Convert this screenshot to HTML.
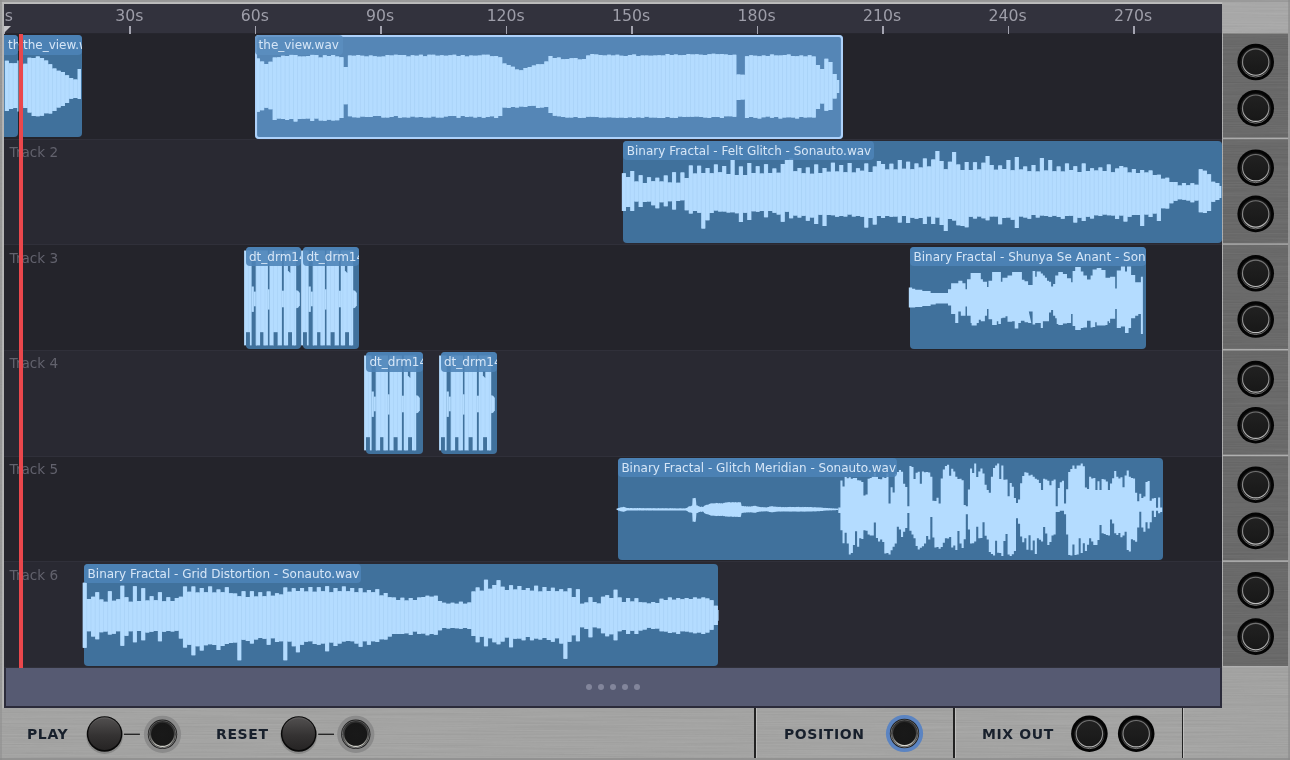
<!DOCTYPE html><html><head><meta charset="utf-8"><title>Timeline</title><style>
*{box-sizing:border-box;margin:0;padding:0}
html,body{width:1290px;height:760px;overflow:hidden}
#timeline,.blabel{will-change:transform}
body{position:relative;background:#a3a3a3;font-family:"DejaVu Sans","Liberation Sans",sans-serif}
#metal{position:absolute;left:0;top:0;width:1290px;height:760px}
#timeline{position:absolute;left:4px;top:4px;width:1217.8px;height:664px;background:#24242b;overflow:hidden}
#ruler{position:absolute;left:0;top:0;width:100%;height:30.2px;background:#32323d;border-bottom:1px solid #26262e}
.tick{position:absolute;top:21.7px;width:1.4px;height:8px;background:#a4a4b0;margin-left:-0.7px}
.tl{position:absolute;top:1.5px;width:60px;margin-left:-30px;text-align:center;font-size:15.7px;line-height:20px;color:#9e9ea9}
.track{position:absolute;left:0;width:100%;height:105.67px;border-bottom:1px solid #30303a}
.track.odd{background:#24242b}.track.even{background:#292932}
.tname{position:absolute;left:5.6px;top:4.3px;font-size:13.6px;line-height:16px;color:#62626d}
.clip{position:absolute;height:102px;background:#40719c;border-radius:4px}
.clip.sel{background:#5586b6;box-shadow:inset 0 0 0 2.1px #aed2fb;height:103.4px}
.clip .lbl{position:absolute;left:0;top:0;height:19.4px;background:rgba(76,131,183,.88);border-radius:4px;font-size:12px;line-height:20.4px;color:#d6e6f7;padding-left:3.4px;white-space:nowrap;overflow:hidden}
.clip.first .lbl{padding-left:7px}
.clip.sel .lbl{background:rgba(92,142,192,.85)}

#playhead{position:absolute;left:15px;top:30px;width:3.5px;height:636px;background:#ea474c}
#phtri{position:absolute;left:0;top:22px;width:0;height:0;border-top:7.4px solid #c4c4c8;border-right:7.4px solid transparent}
#scroll{position:absolute;left:4.2px;top:668px;width:1217.6px;height:39.6px;background:#565a72;border:2px solid #2b2b3a;border-top:0}
#dots{position:absolute;left:585px;top:683px;width:60px;height:8px}
.dot{position:absolute;top:0.8px;width:6.4px;height:6.4px;border-radius:3.2px;background:#82859b}

.blabel{position:absolute;top:725px;font-family:"DejaVu Sans","Liberation Sans",sans-serif;font-weight:bold;font-size:14px;line-height:18px;color:#18202c;letter-spacing:0.6px;white-space:nowrap}
.div{position:absolute;top:708px;width:1.6px;height:50px;background:#222;box-shadow:1px 0 0 rgba(255,255,255,.3)}
#hw{position:absolute;left:0;top:0;width:1290px;height:760px}
</style></head><body>
<svg id="metal" width="1290" height="760" viewBox="0 0 1290 760">
<defs>
<filter id="brush" x="0" y="0" width="100%" height="100%"><feTurbulence type="fractalNoise" baseFrequency="0.008 1.1" numOctaves="2" seed="3" result="n"/><feColorMatrix type="matrix" values="0 0 0 0 1  0 0 0 0 1  0 0 0 0 1  0.5 0 0 0 -0.17"/></filter>
<filter id="brushd" x="0" y="0" width="100%" height="100%"><feTurbulence type="fractalNoise" baseFrequency="0.008 1.1" numOctaves="2" seed="8" result="n"/><feColorMatrix type="matrix" values="0 0 0 0 0  0 0 0 0 0  0 0 0 0 0  0.5 0 0 0 -0.17"/></filter>
</defs>
<rect width="1290" height="760" fill="#a2a2a1"/>
<rect x="0" y="0" width="1290" height="2" fill="#999"/>
<rect x="0" y="2" width="1290" height="31.5" fill="#a9a9a9"/>
<rect x="1222" y="33.5" width="68" height="634.5" fill="#aeaeae"/>
<rect x="1223" y="33.5" width="65.1" height="104.1" fill="#696969"/><rect x="1223" y="139.2" width="65.1" height="104.1" fill="#696969"/><rect x="1223" y="244.8" width="65.1" height="104.1" fill="#696969"/><rect x="1223" y="350.5" width="65.1" height="104.1" fill="#696969"/><rect x="1223" y="456.2" width="65.1" height="104.1" fill="#696969"/><rect x="1223" y="561.9" width="65.1" height="104.1" fill="#696969"/>
<rect x="0" y="708" width="1290" height="52" fill="#a4a4a3"/>
<rect x="1222" y="667.6" width="68" height="40.4" fill="#a3a3a2"/>
<rect width="1290" height="760" filter="url(#brush)" opacity="0.22"/>
<rect width="1290" height="760" filter="url(#brushd)" opacity="0.16"/>
<rect x="2.2" y="2.2" width="2" height="706" fill="#b6b6b6"/>
<rect x="2.2" y="2.2" width="1220" height="1.8" fill="#bcbcbc"/>
<rect x="0" y="0" width="2" height="760" fill="#8e8e8e" opacity=".55"/>
<rect x="0" y="758" width="1290" height="2" fill="#8a8a8a" opacity=".7"/>
<rect x="1288.2" y="0" width="1.8" height="760" fill="#8c8c8c" opacity=".7"/>
</svg>
<div id="timeline">
<div class="track odd" style="top:30.00px"><span class="tname">Track 1</span></div>
<div class="track even" style="top:135.67px"><span class="tname">Track 2</span></div>
<div class="track odd" style="top:241.34px"><span class="tname">Track 3</span></div>
<div class="track even" style="top:347.01px"><span class="tname">Track 4</span></div>
<div class="track odd" style="top:452.68px"><span class="tname">Track 5</span></div>
<div class="track even" style="top:558.35px"><span class="tname">Track 6</span></div>
<div id="ruler">
<div class="tick" style="left:0.7px"></div><div class="tl" style="left:-0.1px">0s</div>
<div class="tick" style="left:126.1px"></div><div class="tl" style="left:125.3px">30s</div>
<div class="tick" style="left:251.6px"></div><div class="tl" style="left:250.8px">60s</div>
<div class="tick" style="left:377.1px"></div><div class="tl" style="left:376.2px">90s</div>
<div class="tick" style="left:502.5px"></div><div class="tl" style="left:501.7px">120s</div>
<div class="tick" style="left:627.9px"></div><div class="tl" style="left:627.1px">150s</div>
<div class="tick" style="left:753.4px"></div><div class="tl" style="left:752.6px">180s</div>
<div class="tick" style="left:878.8px"></div><div class="tl" style="left:878.0px">210s</div>
<div class="tick" style="left:1004.3px"></div><div class="tl" style="left:1003.5px">240s</div>
<div class="tick" style="left:1129.8px"></div><div class="tl" style="left:1129.0px">270s</div>
<div id="phtri"></div></div>
<div class="clip first" style="left:-3.0px;top:31.4px;width:17.4px"><svg width="17.4" height="103.4" viewBox="1.0 35.4 17.4 103.4" style="position:absolute;left:0;top:0;overflow:visible"><path d="M4.8 61.2 L9.0 61.2 L9.0 63.6 L13.2 63.6 L13.2 63.6 L17.3 63.6 L17.3 60.8 L18.4 60.8 L18.4 111.8 L17.3 111.8 L17.3 108.4 L13.2 108.4 L13.2 109.3 L9.0 109.3 L9.0 111.5 L4.8 111.5Z" fill="#aad3f8"/><path d="M5.2 61.2h3.3V111.5h-3.3zM9.4 63.6h3.3V109.3h-3.3zM13.6 63.6h3.3V108.4h-3.3zM17.8 60.8h0.4V111.8h-0.4z" fill="#b4dcff"/></svg><div class="lbl" style="width:100%">th</div></div>
<div class="clip" style="left:15.6px;top:31.4px;width:62.9px"><svg width="62.9" height="103.4" viewBox="19.6 35.4 62.9 103.4" style="position:absolute;left:0;top:0;overflow:visible"><path d="M18.6 65.5 L22.8 65.5 L22.8 64.1 L27.0 64.1 L27.0 58.2 L31.1 58.2 L31.1 58.3 L35.3 58.3 L35.3 57.0 L39.5 57.0 L39.5 58.4 L43.7 58.4 L43.7 61.0 L47.9 61.0 L47.9 64.6 L52.0 64.6 L52.0 68.9 L56.2 68.9 L56.2 71.2 L60.4 71.2 L60.4 72.5 L64.6 72.5 L64.6 75.7 L68.8 75.7 L68.8 78.4 L72.9 78.4 L72.9 79.9 L77.1 79.9 L77.1 69.5 L80.6 69.5 L80.6 99.3 L77.1 99.3 L77.1 98.4 L72.9 98.4 L72.9 99.2 L68.8 99.2 L68.8 103.3 L64.6 103.3 L64.6 106.3 L60.4 106.3 L60.4 108.0 L56.2 108.0 L56.2 111.5 L52.0 111.5 L52.0 113.8 L47.9 113.8 L47.9 113.6 L43.7 113.6 L43.7 116.2 L39.5 116.2 L39.5 116.7 L35.3 116.7 L35.3 116.3 L31.1 116.3 L31.1 113.0 L27.0 113.0 L27.0 108.5 L22.8 108.5 L22.8 106.6 L18.6 106.6Z" fill="#aad3f8"/><path d="M19.1 65.5h3.3V106.6h-3.3zM23.2 64.1h3.3V108.5h-3.3zM27.4 58.2h3.3V113.0h-3.3zM31.6 58.3h3.3V116.3h-3.3zM35.8 57.0h3.3V116.7h-3.3zM40.0 58.4h3.3V116.2h-3.3zM44.1 61.0h3.3V113.6h-3.3zM48.3 64.6h3.3V113.8h-3.3zM52.5 68.9h3.3V111.5h-3.3zM56.7 71.2h3.3V108.0h-3.3zM60.9 72.5h3.3V106.3h-3.3zM65.0 75.7h3.3V103.3h-3.3zM69.2 78.4h3.3V99.2h-3.3zM73.4 79.9h3.3V98.4h-3.3zM77.6 69.5h2.6V99.3h-2.6z" fill="#b4dcff"/></svg><div class="lbl" style="width:100%">the_view.wav</div></div>
<div class="clip sel" style="left:251.2px;top:31.4px;width:588.0px"><svg width="588.0" height="103.4" viewBox="255.2 35.4 588.0 103.4" style="position:absolute;left:0;top:0;overflow:visible"><path d="M256.0 59.0 L260.2 59.0 L260.2 61.8 L264.4 61.8 L264.4 64.5 L268.5 64.5 L268.5 62.2 L272.7 62.2 L272.7 57.9 L276.9 57.9 L276.9 57.7 L281.1 57.7 L281.1 56.2 L285.3 56.2 L285.3 56.4 L289.4 56.4 L289.4 54.6 L293.6 54.6 L293.6 55.4 L297.8 55.4 L297.8 56.9 L302.0 56.9 L302.0 57.0 L306.2 57.0 L306.2 56.5 L310.3 56.5 L310.3 54.5 L314.5 54.5 L314.5 55.3 L318.7 55.3 L318.7 57.8 L322.9 57.8 L322.9 55.6 L327.1 55.6 L327.1 56.5 L331.2 56.5 L331.2 55.4 L335.4 55.4 L335.4 57.0 L339.6 57.0 L339.6 57.7 L343.8 57.7 L343.8 67.4 L348.0 67.4 L348.0 55.8 L352.1 55.8 L352.1 56.1 L356.3 56.1 L356.3 55.4 L360.5 55.4 L360.5 56.1 L364.7 56.1 L364.7 57.0 L368.9 57.0 L368.9 56.0 L373.0 56.0 L373.0 56.7 L377.2 56.7 L377.2 57.2 L381.4 57.2 L381.4 56.8 L385.6 56.8 L385.6 55.3 L389.8 55.3 L389.8 55.9 L393.9 55.9 L393.9 55.2 L398.1 55.2 L398.1 55.5 L402.3 55.5 L402.3 55.5 L406.5 55.5 L406.5 56.9 L410.7 56.9 L410.7 55.7 L414.8 55.7 L414.8 56.1 L419.0 56.1 L419.0 55.2 L423.2 55.2 L423.2 56.6 L427.4 56.6 L427.4 55.1 L431.6 55.1 L431.6 55.2 L435.7 55.2 L435.7 56.2 L439.9 56.2 L439.9 55.7 L444.1 55.7 L444.1 56.1 L448.3 56.1 L448.3 55.6 L452.5 55.6 L452.5 55.2 L456.6 55.2 L456.6 56.4 L460.8 56.4 L460.8 55.3 L465.0 55.3 L465.0 57.0 L469.2 57.0 L469.2 55.8 L473.4 55.8 L473.4 56.2 L477.5 56.2 L477.5 55.9 L481.7 55.9 L481.7 55.1 L485.9 55.1 L485.9 55.1 L490.1 55.1 L490.1 56.7 L494.3 56.7 L494.3 56.5 L498.4 56.5 L498.4 57.7 L502.6 57.7 L502.6 64.0 L506.8 64.0 L506.8 65.5 L511.0 65.5 L511.0 67.2 L515.2 67.2 L515.2 70.0 L519.3 70.0 L519.3 70.6 L523.5 70.6 L523.5 68.5 L527.7 68.5 L527.7 67.3 L531.9 67.3 L531.9 66.0 L536.1 66.0 L536.1 64.6 L540.2 64.6 L540.2 64.6 L544.4 64.6 L544.4 62.0 L548.6 62.0 L548.6 56.5 L552.8 56.5 L552.8 58.3 L557.0 58.3 L557.0 57.8 L561.1 57.8 L561.1 59.6 L565.3 59.6 L565.3 59.5 L569.5 59.5 L569.5 58.6 L573.7 58.6 L573.7 58.3 L577.9 58.3 L577.9 59.8 L582.0 59.8 L582.0 59.3 L586.2 59.3 L586.2 55.8 L590.4 55.8 L590.4 54.5 L594.6 54.5 L594.6 55.0 L598.8 55.0 L598.8 55.4 L602.9 55.4 L602.9 55.8 L607.1 55.8 L607.1 55.2 L611.3 55.2 L611.3 56.0 L615.5 56.0 L615.5 55.2 L619.7 55.2 L619.7 56.2 L623.8 56.2 L623.8 56.5 L628.0 56.5 L628.0 55.5 L632.2 55.5 L632.2 54.8 L636.4 54.8 L636.4 56.4 L640.6 56.4 L640.6 55.9 L644.7 55.9 L644.7 56.0 L648.9 56.0 L648.9 56.1 L653.1 56.1 L653.1 55.8 L657.3 55.8 L657.3 55.7 L661.5 55.7 L661.5 55.8 L665.6 55.8 L665.6 54.5 L669.8 54.5 L669.8 55.3 L674.0 55.3 L674.0 54.8 L678.2 54.8 L678.2 55.6 L682.4 55.6 L682.4 55.3 L686.5 55.3 L686.5 54.4 L690.7 54.4 L690.7 54.9 L694.9 54.9 L694.9 54.6 L699.1 54.6 L699.1 55.2 L703.3 55.2 L703.3 55.4 L707.4 55.4 L707.4 54.7 L711.6 54.7 L711.6 54.2 L715.8 54.2 L715.8 54.7 L720.0 54.7 L720.0 54.3 L724.2 54.3 L724.2 54.8 L728.3 54.8 L728.3 55.3 L732.5 55.3 L732.5 55.1 L736.7 55.1 L736.7 75.0 L740.9 75.0 L740.9 75.2 L745.1 75.2 L745.1 56.6 L749.2 56.6 L749.2 55.7 L753.4 55.7 L753.4 56.1 L757.6 56.1 L757.6 56.7 L761.8 56.7 L761.8 56.0 L766.0 56.0 L766.0 56.5 L770.1 56.5 L770.1 54.9 L774.3 54.9 L774.3 55.9 L778.5 55.9 L778.5 55.9 L782.7 55.9 L782.7 55.3 L786.9 55.3 L786.9 55.0 L791.0 55.0 L791.0 56.5 L795.2 56.5 L795.2 56.6 L799.4 56.6 L799.4 55.9 L803.6 55.9 L803.6 56.8 L807.8 56.8 L807.8 55.7 L811.9 55.7 L811.9 57.0 L816.1 57.0 L816.1 65.4 L820.3 65.4 L820.3 69.5 L824.5 69.5 L824.5 59.1 L828.7 59.1 L828.7 62.4 L832.8 62.4 L832.8 74.3 L837.0 74.3 L837.0 80.5 L839.5 80.5 L839.5 93.5 L837.0 93.5 L837.0 99.0 L832.8 99.0 L832.8 110.3 L828.7 110.3 L828.7 111.2 L824.5 111.2 L824.5 104.0 L820.3 104.0 L820.3 109.3 L816.1 109.3 L816.1 118.0 L811.9 118.0 L811.9 117.6 L807.8 117.6 L807.8 118.0 L803.6 118.0 L803.6 117.5 L799.4 117.5 L799.4 118.8 L795.2 118.8 L795.2 117.8 L791.0 117.8 L791.0 117.6 L786.9 117.6 L786.9 117.9 L782.7 117.9 L782.7 118.8 L778.5 118.8 L778.5 117.3 L774.3 117.3 L774.3 118.1 L770.1 118.1 L770.1 117.0 L766.0 117.0 L766.0 117.7 L761.8 117.7 L761.8 118.9 L757.6 118.9 L757.6 118.1 L753.4 118.1 L753.4 117.3 L749.2 117.3 L749.2 118.3 L745.1 118.3 L745.1 100.0 L740.9 100.0 L740.9 100.3 L736.7 100.3 L736.7 117.2 L732.5 117.2 L732.5 116.7 L728.3 116.7 L728.3 116.6 L724.2 116.6 L724.2 118.3 L720.0 118.3 L720.0 117.4 L715.8 117.4 L715.8 117.5 L711.6 117.5 L711.6 118.5 L707.4 118.5 L707.4 117.9 L703.3 117.9 L703.3 117.5 L699.1 117.5 L699.1 116.8 L694.9 116.8 L694.9 117.2 L690.7 117.2 L690.7 117.1 L686.5 117.1 L686.5 117.3 L682.4 117.3 L682.4 117.0 L678.2 117.0 L678.2 118.3 L674.0 118.3 L674.0 118.2 L669.8 118.2 L669.8 117.3 L665.6 117.3 L665.6 118.4 L661.5 118.4 L661.5 118.5 L657.3 118.5 L657.3 117.8 L653.1 117.8 L653.1 118.0 L648.9 118.0 L648.9 117.2 L644.7 117.2 L644.7 118.2 L640.6 118.2 L640.6 117.7 L636.4 117.7 L636.4 118.3 L632.2 118.3 L632.2 117.6 L628.0 117.6 L628.0 118.4 L623.8 118.4 L623.8 117.8 L619.7 117.8 L619.7 118.1 L615.5 118.1 L615.5 118.0 L611.3 118.0 L611.3 117.6 L607.1 117.6 L607.1 117.8 L602.9 117.8 L602.9 117.8 L598.8 117.8 L598.8 117.5 L594.6 117.5 L594.6 117.2 L590.4 117.2 L590.4 117.2 L586.2 117.2 L586.2 118.2 L582.0 118.2 L582.0 118.4 L577.9 118.4 L577.9 117.5 L573.7 117.5 L573.7 118.0 L569.5 118.0 L569.5 117.9 L565.3 117.9 L565.3 117.3 L561.1 117.3 L561.1 116.7 L557.0 116.7 L557.0 116.1 L552.8 116.1 L552.8 113.3 L548.6 113.3 L548.6 107.5 L544.4 107.5 L544.4 107.9 L540.2 107.9 L540.2 108.4 L536.1 108.4 L536.1 106.2 L531.9 106.2 L531.9 106.5 L527.7 106.5 L527.7 107.5 L523.5 107.5 L523.5 106.9 L519.3 106.9 L519.3 107.8 L515.2 107.8 L515.2 107.3 L511.0 107.3 L511.0 108.3 L506.8 108.3 L506.8 107.8 L502.6 107.8 L502.6 116.4 L498.4 116.4 L498.4 118.4 L494.3 118.4 L494.3 116.7 L490.1 116.7 L490.1 117.4 L485.9 117.4 L485.9 118.2 L481.7 118.2 L481.7 117.2 L477.5 117.2 L477.5 118.0 L473.4 118.0 L473.4 116.8 L469.2 116.8 L469.2 117.4 L465.0 117.4 L465.0 116.4 L460.8 116.4 L460.8 118.2 L456.6 118.2 L456.6 116.5 L452.5 116.5 L452.5 116.5 L448.3 116.5 L448.3 116.8 L444.1 116.8 L444.1 118.0 L439.9 118.0 L439.9 117.9 L435.7 117.9 L435.7 116.8 L431.6 116.8 L431.6 118.0 L427.4 118.0 L427.4 117.8 L423.2 117.8 L423.2 117.5 L419.0 117.5 L419.0 117.6 L414.8 117.6 L414.8 116.8 L410.7 116.8 L410.7 118.0 L406.5 118.0 L406.5 117.6 L402.3 117.6 L402.3 118.1 L398.1 118.1 L398.1 116.3 L393.9 116.3 L393.9 117.4 L389.8 117.4 L389.8 117.8 L385.6 117.8 L385.6 118.0 L381.4 118.0 L381.4 116.3 L377.2 116.3 L377.2 116.4 L373.0 116.4 L373.0 117.3 L368.9 117.3 L368.9 117.3 L364.7 117.3 L364.7 117.0 L360.5 117.0 L360.5 117.8 L356.3 117.8 L356.3 117.7 L352.1 117.7 L352.1 116.6 L348.0 116.6 L348.0 104.7 L343.8 104.7 L343.8 118.4 L339.6 118.4 L339.6 120.7 L335.4 120.7 L335.4 120.8 L331.2 120.8 L331.2 120.1 L327.1 120.1 L327.1 121.1 L322.9 121.1 L322.9 121.0 L318.7 121.0 L318.7 119.0 L314.5 119.0 L314.5 121.3 L310.3 121.3 L310.3 119.0 L306.2 119.0 L306.2 119.2 L302.0 119.2 L302.0 119.4 L297.8 119.4 L297.8 121.8 L293.6 121.8 L293.6 119.4 L289.4 119.4 L289.4 120.5 L285.3 120.5 L285.3 119.4 L281.1 119.4 L281.1 118.9 L276.9 118.9 L276.9 120.5 L272.7 120.5 L272.7 109.6 L268.5 109.6 L268.5 108.1 L264.4 108.1 L264.4 110.7 L260.2 110.7 L260.2 112.2 L256.0 112.2Z" fill="#aad3f8"/><path d="M256.4 59.0h3.3V112.2h-3.3zM260.6 61.8h3.3V110.7h-3.3zM264.8 64.5h3.3V108.1h-3.3zM269.0 62.2h3.3V109.6h-3.3zM273.2 57.9h3.3V120.5h-3.3zM277.3 57.7h3.3V118.9h-3.3zM281.5 56.2h3.3V119.4h-3.3zM285.7 56.4h3.3V120.5h-3.3zM289.9 54.6h3.3V119.4h-3.3zM294.1 55.4h3.3V121.8h-3.3zM298.2 56.9h3.3V119.4h-3.3zM302.4 57.0h3.3V119.2h-3.3zM306.6 56.5h3.3V119.0h-3.3zM310.8 54.5h3.3V121.3h-3.3zM315.0 55.3h3.3V119.0h-3.3zM319.1 57.8h3.3V121.0h-3.3zM323.3 55.6h3.3V121.1h-3.3zM327.5 56.5h3.3V120.1h-3.3zM331.7 55.4h3.3V120.8h-3.3zM335.9 57.0h3.3V120.7h-3.3zM340.1 57.7h3.3V118.4h-3.3zM344.2 67.4h3.3V104.7h-3.3zM348.4 55.8h3.3V116.6h-3.3zM352.6 56.1h3.3V117.7h-3.3zM356.8 55.4h3.3V117.8h-3.3zM360.9 56.1h3.3V117.0h-3.3zM365.1 57.0h3.3V117.3h-3.3zM369.3 56.0h3.3V117.3h-3.3zM373.5 56.7h3.3V116.4h-3.3zM377.7 57.2h3.3V116.3h-3.3zM381.8 56.8h3.3V118.0h-3.3zM386.0 55.3h3.3V117.8h-3.3zM390.2 55.9h3.3V117.4h-3.3zM394.4 55.2h3.3V116.3h-3.3zM398.6 55.5h3.3V118.1h-3.3zM402.7 55.5h3.3V117.6h-3.3zM406.9 56.9h3.3V118.0h-3.3zM411.1 55.7h3.3V116.8h-3.3zM415.3 56.1h3.3V117.6h-3.3zM419.5 55.2h3.3V117.5h-3.3zM423.6 56.6h3.3V117.8h-3.3zM427.8 55.1h3.3V118.0h-3.3zM432.0 55.2h3.3V116.8h-3.3zM436.2 56.2h3.3V117.9h-3.3zM440.4 55.7h3.3V118.0h-3.3zM444.6 56.1h3.3V116.8h-3.3zM448.7 55.6h3.3V116.5h-3.3zM452.9 55.2h3.3V116.5h-3.3zM457.1 56.4h3.3V118.2h-3.3zM461.3 55.3h3.3V116.4h-3.3zM465.4 57.0h3.3V117.4h-3.3zM469.6 55.8h3.3V116.8h-3.3zM473.8 56.2h3.3V118.0h-3.3zM478.0 55.9h3.3V117.2h-3.3zM482.2 55.1h3.3V118.2h-3.3zM486.3 55.1h3.3V117.4h-3.3zM490.5 56.7h3.3V116.7h-3.3zM494.7 56.5h3.3V118.4h-3.3zM498.9 57.7h3.3V116.4h-3.3zM503.1 64.0h3.3V107.8h-3.3zM507.2 65.5h3.3V108.3h-3.3zM511.4 67.2h3.3V107.3h-3.3zM515.6 70.0h3.3V107.8h-3.3zM519.8 70.6h3.3V106.9h-3.3zM524.0 68.5h3.3V107.5h-3.3zM528.2 67.3h3.3V106.5h-3.3zM532.3 66.0h3.3V106.2h-3.3zM536.5 64.6h3.3V108.4h-3.3zM540.7 64.6h3.3V107.9h-3.3zM544.9 62.0h3.3V107.5h-3.3zM549.0 56.5h3.3V113.3h-3.3zM553.2 58.3h3.3V116.1h-3.3zM557.4 57.8h3.3V116.7h-3.3zM561.6 59.6h3.3V117.3h-3.3zM565.8 59.5h3.3V117.9h-3.3zM570.0 58.6h3.3V118.0h-3.3zM574.1 58.3h3.3V117.5h-3.3zM578.3 59.8h3.3V118.4h-3.3zM582.5 59.3h3.3V118.2h-3.3zM586.7 55.8h3.3V117.2h-3.3zM590.9 54.5h3.3V117.2h-3.3zM595.0 55.0h3.3V117.5h-3.3zM599.2 55.4h3.3V117.8h-3.3zM603.4 55.8h3.3V117.8h-3.3zM607.6 55.2h3.3V117.6h-3.3zM611.8 56.0h3.3V118.0h-3.3zM615.9 55.2h3.3V118.1h-3.3zM620.1 56.2h3.3V117.8h-3.3zM624.3 56.5h3.3V118.4h-3.3zM628.5 55.5h3.3V117.6h-3.3zM632.7 54.8h3.3V118.3h-3.3zM636.8 56.4h3.3V117.7h-3.3zM641.0 55.9h3.3V118.2h-3.3zM645.2 56.0h3.3V117.2h-3.3zM649.4 56.1h3.3V118.0h-3.3zM653.5 55.8h3.3V117.8h-3.3zM657.7 55.7h3.3V118.5h-3.3zM661.9 55.8h3.3V118.4h-3.3zM666.1 54.5h3.3V117.3h-3.3zM670.3 55.3h3.3V118.2h-3.3zM674.5 54.8h3.3V118.3h-3.3zM678.6 55.6h3.3V117.0h-3.3zM682.8 55.3h3.3V117.3h-3.3zM687.0 54.4h3.3V117.1h-3.3zM691.2 54.9h3.3V117.2h-3.3zM695.4 54.6h3.3V116.8h-3.3zM699.5 55.2h3.3V117.5h-3.3zM703.7 55.4h3.3V117.9h-3.3zM707.9 54.7h3.3V118.5h-3.3zM712.1 54.2h3.3V117.5h-3.3zM716.2 54.7h3.3V117.4h-3.3zM720.4 54.3h3.3V118.3h-3.3zM724.6 54.8h3.3V116.6h-3.3zM728.8 55.3h3.3V116.7h-3.3zM733.0 55.1h3.3V117.2h-3.3zM737.2 75.0h3.3V100.3h-3.3zM741.3 75.2h3.3V100.0h-3.3zM745.5 56.6h3.3V118.3h-3.3zM749.7 55.7h3.3V117.3h-3.3zM753.9 56.1h3.3V118.1h-3.3zM758.0 56.7h3.3V118.9h-3.3zM762.2 56.0h3.3V117.7h-3.3zM766.4 56.5h3.3V117.0h-3.3zM770.6 54.9h3.3V118.1h-3.3zM774.8 55.9h3.3V117.3h-3.3zM779.0 55.9h3.3V118.8h-3.3zM783.1 55.3h3.3V117.9h-3.3zM787.3 55.0h3.3V117.6h-3.3zM791.5 56.5h3.3V117.8h-3.3zM795.7 56.6h3.3V118.8h-3.3zM799.9 55.9h3.3V117.5h-3.3zM804.0 56.8h3.3V118.0h-3.3zM808.2 55.7h3.3V117.6h-3.3zM812.4 57.0h3.3V118.0h-3.3zM816.6 65.4h3.3V109.3h-3.3zM820.8 69.5h3.3V104.0h-3.3zM824.9 59.1h3.3V111.2h-3.3zM829.1 62.4h3.3V110.3h-3.3zM833.3 74.3h3.3V99.0h-3.3zM837.5 80.5h1.6V93.5h-1.6z" fill="#b4dcff"/></svg><div class="lbl" style="width:88.0px">the_view.wav</div></div>
<div class="clip" style="left:619.4px;top:137.0px;width:598.4px"><svg width="598.4" height="103.4" viewBox="623.4 141.0 598.4 103.4" style="position:absolute;left:0;top:0;overflow:visible"><path d="M622.2 173.3 L626.4 173.3 L626.4 177.0 L630.6 177.0 L630.6 171.0 L634.7 171.0 L634.7 181.6 L638.9 181.6 L638.9 175.3 L643.1 175.3 L643.1 183.0 L647.3 183.0 L647.3 177.2 L651.5 177.2 L651.5 181.3 L655.6 181.3 L655.6 177.8 L659.8 177.8 L659.8 181.6 L664.0 181.6 L664.0 175.6 L668.2 175.6 L668.2 182.4 L672.4 182.4 L672.4 172.3 L676.5 172.3 L676.5 182.8 L680.7 182.8 L680.7 172.4 L684.9 172.4 L684.9 178.1 L689.1 178.1 L689.1 165.4 L693.3 165.4 L693.3 173.4 L697.4 173.4 L697.4 165.7 L701.6 165.7 L701.6 173.1 L705.8 173.1 L705.8 167.9 L710.0 167.9 L710.0 173.2 L714.2 173.2 L714.2 164.5 L718.3 164.5 L718.3 172.2 L722.5 172.2 L722.5 165.9 L726.7 165.9 L726.7 173.9 L730.9 173.9 L730.9 160.0 L735.1 160.0 L735.1 175.1 L739.2 175.1 L739.2 166.5 L743.4 166.5 L743.4 174.9 L747.6 174.9 L747.6 163.0 L751.8 163.0 L751.8 173.1 L756.0 173.1 L756.0 166.2 L760.1 166.2 L760.1 173.6 L764.3 173.6 L764.3 164.3 L768.5 164.3 L768.5 173.0 L772.7 173.0 L772.7 168.5 L776.9 168.5 L776.9 172.7 L781.0 172.7 L781.0 163.9 L785.2 163.9 L785.2 160.0 L789.4 160.0 L789.4 158.5 L793.6 158.5 L793.6 171.3 L797.8 171.3 L797.8 167.9 L801.9 167.9 L801.9 173.3 L806.1 173.3 L806.1 167.6 L810.3 167.6 L810.3 173.7 L814.5 173.7 L814.5 164.5 L818.7 164.5 L818.7 173.1 L822.8 173.1 L822.8 168.1 L827.0 168.1 L827.0 171.7 L831.2 171.7 L831.2 162.8 L835.4 162.8 L835.4 171.4 L839.6 171.4 L839.6 164.9 L843.7 164.9 L843.7 172.3 L847.9 172.3 L847.9 163.0 L852.1 163.0 L852.1 172.4 L856.3 172.4 L856.3 168.2 L860.5 168.2 L860.5 170.8 L864.6 170.8 L864.6 163.4 L868.8 163.4 L868.8 171.9 L873.0 171.9 L873.0 166.6 L877.2 166.6 L877.2 161.0 L881.4 161.0 L881.4 164.0 L885.5 164.0 L885.5 169.6 L889.7 169.6 L889.7 163.7 L893.9 163.7 L893.9 169.5 L898.1 169.5 L898.1 160.0 L902.3 160.0 L902.3 168.7 L906.4 168.7 L906.4 161.8 L910.6 161.8 L910.6 169.3 L914.8 169.3 L914.8 163.6 L919.0 163.6 L919.0 167.5 L923.2 167.5 L923.2 158.6 L927.3 158.6 L927.3 166.5 L931.5 166.5 L931.5 159.4 L935.7 159.4 L935.7 151.0 L939.9 151.0 L939.9 161.0 L944.1 161.0 L944.1 169.2 L948.2 169.2 L948.2 161.8 L952.4 161.8 L952.4 152.0 L956.6 152.0 L956.6 164.5 L960.8 164.5 L960.8 170.1 L965.0 170.1 L965.0 162.0 L969.1 162.0 L969.1 170.0 L973.3 170.0 L973.3 162.3 L977.5 162.3 L977.5 169.4 L981.7 169.4 L981.7 162.8 L985.9 162.8 L985.9 156.0 L990.0 156.0 L990.0 165.0 L994.2 165.0 L994.2 169.7 L998.4 169.7 L998.4 165.6 L1002.6 165.6 L1002.6 169.0 L1006.8 169.0 L1006.8 160.0 L1010.9 160.0 L1010.9 170.3 L1015.1 170.3 L1015.1 157.0 L1019.3 157.0 L1019.3 169.6 L1023.5 169.6 L1023.5 166.6 L1027.7 166.6 L1027.7 171.2 L1031.8 171.2 L1031.8 164.9 L1036.0 164.9 L1036.0 171.5 L1040.2 171.5 L1040.2 158.0 L1044.4 158.0 L1044.4 170.4 L1048.6 170.4 L1048.6 160.0 L1052.7 160.0 L1052.7 171.2 L1056.9 171.2 L1056.9 166.4 L1061.1 166.4 L1061.1 171.4 L1065.3 171.4 L1065.3 163.5 L1069.5 163.5 L1069.5 170.1 L1073.6 170.1 L1073.6 166.3 L1077.8 166.3 L1077.8 172.1 L1082.0 172.1 L1082.0 163.5 L1086.2 163.5 L1086.2 171.0 L1090.4 171.0 L1090.4 168.2 L1094.5 168.2 L1094.5 170.6 L1098.7 170.6 L1098.7 167.6 L1102.9 167.6 L1102.9 171.1 L1107.1 171.1 L1107.1 164.4 L1111.3 164.4 L1111.3 172.2 L1115.4 172.2 L1115.4 168.4 L1119.6 168.4 L1119.6 166.0 L1123.8 166.0 L1123.8 167.6 L1128.0 167.6 L1128.0 172.4 L1132.2 172.4 L1132.2 168.9 L1136.3 168.9 L1136.3 173.0 L1140.5 173.0 L1140.5 170.1 L1144.7 170.1 L1144.7 172.4 L1148.9 172.4 L1148.9 170.6 L1153.1 170.6 L1153.1 175.0 L1157.2 175.0 L1157.2 174.7 L1161.4 174.7 L1161.4 178.7 L1165.6 178.7 L1165.6 177.8 L1169.8 177.8 L1169.8 182.1 L1174.0 182.1 L1174.0 182.0 L1178.1 182.0 L1178.1 185.5 L1182.3 185.5 L1182.3 183.1 L1186.5 183.1 L1186.5 185.3 L1190.7 185.3 L1190.7 183.2 L1194.9 183.2 L1194.9 184.7 L1199.0 184.7 L1199.0 169.3 L1203.2 169.3 L1203.2 170.8 L1207.4 170.8 L1207.4 174.2 L1211.6 174.2 L1211.6 181.8 L1215.8 181.8 L1215.8 183.0 L1219.9 183.0 L1219.9 186.1 L1221.8 186.1 L1221.8 197.9 L1219.9 197.9 L1219.9 199.9 L1215.8 199.9 L1215.8 201.8 L1211.6 201.8 L1211.6 210.9 L1207.4 210.9 L1207.4 213.0 L1203.2 213.0 L1203.2 212.3 L1199.0 212.3 L1199.0 200.6 L1194.9 200.6 L1194.9 202.3 L1190.7 202.3 L1190.7 200.6 L1186.5 200.6 L1186.5 199.7 L1182.3 199.7 L1182.3 199.2 L1178.1 199.2 L1178.1 200.8 L1174.0 200.8 L1174.0 203.3 L1169.8 203.3 L1169.8 208.4 L1165.6 208.4 L1165.6 208.2 L1161.4 208.2 L1161.4 221.0 L1157.2 221.0 L1157.2 213.4 L1153.1 213.4 L1153.1 217.0 L1148.9 217.0 L1148.9 214.5 L1144.7 214.5 L1144.7 226.0 L1140.5 226.0 L1140.5 215.1 L1136.3 215.1 L1136.3 214.9 L1132.2 214.9 L1132.2 216.7 L1128.0 216.7 L1128.0 221.5 L1123.8 221.5 L1123.8 215.4 L1119.6 215.4 L1119.6 219.1 L1115.4 219.1 L1115.4 215.4 L1111.3 215.4 L1111.3 215.2 L1107.1 215.2 L1107.1 214.4 L1102.9 214.4 L1102.9 216.0 L1098.7 216.0 L1098.7 215.3 L1094.5 215.3 L1094.5 218.5 L1090.4 218.5 L1090.4 216.7 L1086.2 216.7 L1086.2 220.9 L1082.0 220.9 L1082.0 217.7 L1077.8 217.7 L1077.8 222.4 L1073.6 222.4 L1073.6 215.8 L1069.5 215.8 L1069.5 216.1 L1065.3 216.1 L1065.3 218.8 L1061.1 218.8 L1061.1 217.1 L1056.9 217.1 L1056.9 215.7 L1052.7 215.7 L1052.7 216.8 L1048.6 216.8 L1048.6 216.0 L1044.4 216.0 L1044.4 215.6 L1040.2 215.6 L1040.2 217.5 L1036.0 217.5 L1036.0 214.9 L1031.8 214.9 L1031.8 218.8 L1027.7 218.8 L1027.7 217.5 L1023.5 217.5 L1023.5 216.6 L1019.3 216.6 L1019.3 228.0 L1015.1 228.0 L1015.1 219.7 L1010.9 219.7 L1010.9 217.6 L1006.8 217.6 L1006.8 218.1 L1002.6 218.1 L1002.6 224.2 L998.4 224.2 L998.4 216.6 L994.2 216.6 L994.2 216.4 L990.0 216.4 L990.0 220.2 L985.9 220.2 L985.9 218.3 L981.7 218.3 L981.7 216.6 L977.5 216.6 L977.5 218.5 L973.3 218.5 L973.3 216.8 L969.1 216.8 L969.1 227.3 L965.0 227.3 L965.0 226.0 L960.8 226.0 L960.8 225.3 L956.6 225.3 L956.6 220.5 L952.4 220.5 L952.4 219.0 L948.2 219.0 L948.2 231.0 L944.1 231.0 L944.1 224.9 L939.9 224.9 L939.9 217.5 L935.7 217.5 L935.7 224.0 L931.5 224.0 L931.5 216.6 L927.3 216.6 L927.3 224.0 L923.2 224.0 L923.2 217.9 L919.0 217.9 L919.0 218.7 L914.8 218.7 L914.8 217.8 L910.6 217.8 L910.6 222.9 L906.4 222.9 L906.4 216.1 L902.3 216.1 L902.3 222.5 L898.1 222.5 L898.1 216.5 L893.9 216.5 L893.9 216.8 L889.7 216.8 L889.7 215.9 L885.5 215.9 L885.5 218.1 L881.4 218.1 L881.4 216.1 L877.2 216.1 L877.2 224.6 L873.0 224.6 L873.0 218.0 L868.8 218.0 L868.8 227.5 L864.6 227.5 L864.6 216.7 L860.5 216.7 L860.5 216.0 L856.3 216.0 L856.3 216.5 L852.1 216.5 L852.1 214.6 L847.9 214.6 L847.9 216.5 L843.7 216.5 L843.7 215.9 L839.6 215.9 L839.6 216.7 L835.4 216.7 L835.4 215.3 L831.2 215.3 L831.2 215.0 L827.0 215.0 L827.0 226.0 L822.8 226.0 L822.8 214.8 L818.7 214.8 L818.7 224.1 L814.5 224.1 L814.5 217.4 L810.3 217.4 L810.3 220.7 L806.1 220.7 L806.1 215.8 L801.9 215.8 L801.9 217.6 L797.8 217.6 L797.8 215.4 L793.6 215.4 L793.6 218.2 L789.4 218.2 L789.4 211.7 L785.2 211.7 L785.2 221.8 L781.0 221.8 L781.0 214.6 L776.9 214.6 L776.9 212.8 L772.7 212.8 L772.7 210.9 L768.5 210.9 L768.5 217.3 L764.3 217.3 L764.3 211.0 L760.1 211.0 L760.1 211.7 L756.0 211.7 L756.0 211.2 L751.8 211.2 L751.8 219.9 L747.6 219.9 L747.6 212.7 L743.4 212.7 L743.4 222.0 L739.2 222.0 L739.2 213.2 L735.1 213.2 L735.1 212.3 L730.9 212.3 L730.9 212.6 L726.7 212.6 L726.7 211.4 L722.5 211.4 L722.5 211.4 L718.3 211.4 L718.3 210.4 L714.2 210.4 L714.2 213.0 L710.0 213.0 L710.0 220.2 L705.8 220.2 L705.8 228.5 L701.6 228.5 L701.6 212.8 L697.4 212.8 L697.4 211.1 L693.3 211.1 L693.3 213.6 L689.1 213.6 L689.1 210.2 L684.9 210.2 L684.9 200.3 L680.7 200.3 L680.7 201.0 L676.5 201.0 L676.5 209.4 L672.4 209.4 L672.4 201.3 L668.2 201.3 L668.2 206.2 L664.0 206.2 L664.0 202.3 L659.8 202.3 L659.8 208.3 L655.6 208.3 L655.6 205.3 L651.5 205.3 L651.5 201.4 L647.3 201.4 L647.3 202.0 L643.1 202.0 L643.1 206.9 L638.9 206.9 L638.9 201.4 L634.7 201.4 L634.7 211.0 L630.6 211.0 L630.6 207.0 L626.4 207.0 L626.4 210.9 L622.2 210.9Z" fill="#aad3f8"/><path d="M622.7 173.3h3.3V210.9h-3.3zM626.8 177.0h3.3V207.0h-3.3zM631.0 171.0h3.3V211.0h-3.3zM635.2 181.6h3.3V201.4h-3.3zM639.4 175.3h3.3V206.9h-3.3zM643.6 183.0h3.3V202.0h-3.3zM647.7 177.2h3.3V201.4h-3.3zM651.9 181.3h3.3V205.3h-3.3zM656.1 177.8h3.3V208.3h-3.3zM660.3 181.6h3.3V202.3h-3.3zM664.5 175.6h3.3V206.2h-3.3zM668.6 182.4h3.3V201.3h-3.3zM672.8 172.3h3.3V209.4h-3.3zM677.0 182.8h3.3V201.0h-3.3zM681.2 172.4h3.3V200.3h-3.3zM685.4 178.1h3.3V210.2h-3.3zM689.5 165.4h3.3V213.6h-3.3zM693.7 173.4h3.3V211.1h-3.3zM697.9 165.7h3.3V212.8h-3.3zM702.1 173.1h3.3V228.5h-3.3zM706.3 167.9h3.3V220.2h-3.3zM710.4 173.2h3.3V213.0h-3.3zM714.6 164.5h3.3V210.4h-3.3zM718.8 172.2h3.3V211.4h-3.3zM723.0 165.9h3.3V211.4h-3.3zM727.2 173.9h3.3V212.6h-3.3zM731.3 160.0h3.3V212.3h-3.3zM735.5 175.1h3.3V213.2h-3.3zM739.7 166.5h3.3V222.0h-3.3zM743.9 174.9h3.3V212.7h-3.3zM748.1 163.0h3.3V219.9h-3.3zM752.2 173.1h3.3V211.2h-3.3zM756.4 166.2h3.3V211.7h-3.3zM760.6 173.6h3.3V211.0h-3.3zM764.8 164.3h3.3V217.3h-3.3zM769.0 173.0h3.3V210.9h-3.3zM773.1 168.5h3.3V212.8h-3.3zM777.3 172.7h3.3V214.6h-3.3zM781.5 163.9h3.3V221.8h-3.3zM785.7 160.0h3.3V211.7h-3.3zM789.9 158.5h3.3V218.2h-3.3zM794.0 171.3h3.3V215.4h-3.3zM798.2 167.9h3.3V217.6h-3.3zM802.4 173.3h3.3V215.8h-3.3zM806.6 167.6h3.3V220.7h-3.3zM810.8 173.7h3.3V217.4h-3.3zM814.9 164.5h3.3V224.1h-3.3zM819.1 173.1h3.3V214.8h-3.3zM823.3 168.1h3.3V226.0h-3.3zM827.5 171.7h3.3V215.0h-3.3zM831.7 162.8h3.3V215.3h-3.3zM835.8 171.4h3.3V216.7h-3.3zM840.0 164.9h3.3V215.9h-3.3zM844.2 172.3h3.3V216.5h-3.3zM848.4 163.0h3.3V214.6h-3.3zM852.6 172.4h3.3V216.5h-3.3zM856.7 168.2h3.3V216.0h-3.3zM860.9 170.8h3.3V216.7h-3.3zM865.1 163.4h3.3V227.5h-3.3zM869.3 171.9h3.3V218.0h-3.3zM873.5 166.6h3.3V224.6h-3.3zM877.6 161.0h3.3V216.1h-3.3zM881.8 164.0h3.3V218.1h-3.3zM886.0 169.6h3.3V215.9h-3.3zM890.2 163.7h3.3V216.8h-3.3zM894.4 169.5h3.3V216.5h-3.3zM898.5 160.0h3.3V222.5h-3.3zM902.7 168.7h3.3V216.1h-3.3zM906.9 161.8h3.3V222.9h-3.3zM911.1 169.3h3.3V217.8h-3.3zM915.2 163.6h3.3V218.7h-3.3zM919.4 167.5h3.3V217.9h-3.3zM923.6 158.6h3.3V224.0h-3.3zM927.8 166.5h3.3V216.6h-3.3zM932.0 159.4h3.3V224.0h-3.3zM936.2 151.0h3.3V217.5h-3.3zM940.3 161.0h3.3V224.9h-3.3zM944.5 169.2h3.3V231.0h-3.3zM948.7 161.8h3.3V219.0h-3.3zM952.9 152.0h3.3V220.5h-3.3zM957.1 164.5h3.3V225.3h-3.3zM961.2 170.1h3.3V226.0h-3.3zM965.4 162.0h3.3V227.3h-3.3zM969.6 170.0h3.3V216.8h-3.3zM973.8 162.3h3.3V218.5h-3.3zM978.0 169.4h3.3V216.6h-3.3zM982.1 162.8h3.3V218.3h-3.3zM986.3 156.0h3.3V220.2h-3.3zM990.5 165.0h3.3V216.4h-3.3zM994.7 169.7h3.3V216.6h-3.3zM998.9 165.6h3.3V224.2h-3.3zM1003.0 169.0h3.3V218.1h-3.3zM1007.2 160.0h3.3V217.6h-3.3zM1011.4 170.3h3.3V219.7h-3.3zM1015.6 157.0h3.3V228.0h-3.3zM1019.8 169.6h3.3V216.6h-3.3zM1023.9 166.6h3.3V217.5h-3.3zM1028.1 171.2h3.3V218.8h-3.3zM1032.3 164.9h3.3V214.9h-3.3zM1036.5 171.5h3.3V217.5h-3.3zM1040.7 158.0h3.3V215.6h-3.3zM1044.8 170.4h3.3V216.0h-3.3zM1049.0 160.0h3.3V216.8h-3.3zM1053.2 171.2h3.3V215.7h-3.3zM1057.4 166.4h3.3V217.1h-3.3zM1061.5 171.4h3.3V218.8h-3.3zM1065.7 163.5h3.3V216.1h-3.3zM1069.9 170.1h3.3V215.8h-3.3zM1074.1 166.3h3.3V222.4h-3.3zM1078.3 172.1h3.3V217.7h-3.3zM1082.5 163.5h3.3V220.9h-3.3zM1086.6 171.0h3.3V216.7h-3.3zM1090.8 168.2h3.3V218.5h-3.3zM1095.0 170.6h3.3V215.3h-3.3zM1099.2 167.6h3.3V216.0h-3.3zM1103.4 171.1h3.3V214.4h-3.3zM1107.5 164.4h3.3V215.2h-3.3zM1111.7 172.2h3.3V215.4h-3.3zM1115.9 168.4h3.3V219.1h-3.3zM1120.1 166.0h3.3V215.4h-3.3zM1124.2 167.6h3.3V221.5h-3.3zM1128.4 172.4h3.3V216.7h-3.3zM1132.6 168.9h3.3V214.9h-3.3zM1136.8 173.0h3.3V215.1h-3.3zM1141.0 170.1h3.3V226.0h-3.3zM1145.2 172.4h3.3V214.5h-3.3zM1149.3 170.6h3.3V217.0h-3.3zM1153.5 175.0h3.3V213.4h-3.3zM1157.7 174.7h3.3V221.0h-3.3zM1161.9 178.7h3.3V208.2h-3.3zM1166.0 177.8h3.3V208.4h-3.3zM1170.2 182.1h3.3V203.3h-3.3zM1174.4 182.0h3.3V200.8h-3.3zM1178.6 185.5h3.3V199.2h-3.3zM1182.8 183.1h3.3V199.7h-3.3zM1187.0 185.3h3.3V200.6h-3.3zM1191.1 183.2h3.3V202.3h-3.3zM1195.3 184.7h3.3V200.6h-3.3zM1199.5 169.3h3.3V212.3h-3.3zM1203.7 170.8h3.3V213.0h-3.3zM1207.9 174.2h3.3V210.9h-3.3zM1212.0 181.8h3.3V201.8h-3.3zM1216.2 183.0h3.3V199.9h-3.3zM1220.4 186.1h1.0V197.9h-1.0z" fill="#b4dcff"/></svg><div class="lbl" style="width:250.5px">Binary Fractal - Felt Glitch - Sonauto.wav</div></div>
<div class="clip drum" style="left:241.6px;top:242.7px;width:55.5px"><svg width="55.5" height="103.4" viewBox="245.6 246.7 55.5 103.4" style="position:absolute;left:0;top:0;overflow:visible"><g fill="#b4dcff"><rect x="243.7" y="250.2" width="7.5" height="94.9"/><rect x="255.3" y="250.2" width="12.2" height="94.9"/><rect x="269.1" y="250.2" width="12.4" height="94.9"/><rect x="283.4" y="250.2" width="12.4" height="94.9"/><rect x="251.1" y="286.2" width="2.3" height="25.4"/><rect x="253.3" y="291.3" width="2.1" height="14.7"/><rect x="267.4" y="289.0" width="1.8" height="20.3"/><rect x="281.4" y="290.4" width="2.1" height="16.6"/><path d="M295.7 289.9 l2.0 0.5 l1.7 2.4 v12.2 l-1.7 2.4 l-2.0 .5z"/></g><g fill="#aad3f8"><rect x="247.5" y="250.2" width="0.8" height="94.9"/><rect x="255.8" y="250.2" width="0.8" height="94.9"/><rect x="260.0" y="250.2" width="0.8" height="94.9"/><rect x="264.2" y="250.2" width="0.8" height="94.9"/><rect x="272.6" y="250.2" width="0.8" height="94.9"/><rect x="276.7" y="250.2" width="0.8" height="94.9"/><rect x="285.1" y="250.2" width="0.8" height="94.9"/><rect x="289.3" y="250.2" width="0.8" height="94.9"/><rect x="293.5" y="250.2" width="0.8" height="94.9"/></g><g fill="#40719c"><rect x="245.6" y="331.9" width="3.9" height="14.0"/><rect x="259.7" y="331.9" width="3.3" height="14.0"/><rect x="273.2" y="331.9" width="4.0" height="14.0"/><rect x="287.7" y="331.9" width="3.9" height="14.0"/><path d="M287.5 265.7 h2.4 v7.0 l-2.4 -2.4z"/></g></svg><div class="lbl" style="width:100%">dt_drm14</div></div>
<div class="clip drum" style="left:299.1px;top:242.7px;width:55.8px"><svg width="55.8" height="103.4" viewBox="303.1 246.7 55.8 103.4" style="position:absolute;left:0;top:0;overflow:visible"><g fill="#b4dcff"><rect x="301.2" y="250.2" width="7.5" height="94.9"/><rect x="312.8" y="250.2" width="12.2" height="94.9"/><rect x="326.6" y="250.2" width="12.4" height="94.9"/><rect x="340.9" y="250.2" width="12.4" height="94.9"/><rect x="308.6" y="286.2" width="2.3" height="25.4"/><rect x="310.8" y="291.3" width="2.1" height="14.7"/><rect x="324.9" y="289.0" width="1.8" height="20.3"/><rect x="338.9" y="290.4" width="2.1" height="16.6"/><path d="M353.2 289.9 l2.0 0.5 l1.7 2.4 v12.2 l-1.7 2.4 l-2.0 .5z"/></g><g fill="#aad3f8"><rect x="305.0" y="250.2" width="0.8" height="94.9"/><rect x="313.3" y="250.2" width="0.8" height="94.9"/><rect x="317.5" y="250.2" width="0.8" height="94.9"/><rect x="321.7" y="250.2" width="0.8" height="94.9"/><rect x="330.1" y="250.2" width="0.8" height="94.9"/><rect x="334.2" y="250.2" width="0.8" height="94.9"/><rect x="342.6" y="250.2" width="0.8" height="94.9"/><rect x="346.8" y="250.2" width="0.8" height="94.9"/><rect x="351.0" y="250.2" width="0.8" height="94.9"/></g><g fill="#40719c"><rect x="303.1" y="331.9" width="3.9" height="14.0"/><rect x="317.2" y="331.9" width="3.3" height="14.0"/><rect x="330.7" y="331.9" width="4.0" height="14.0"/><rect x="345.2" y="331.9" width="3.9" height="14.0"/><path d="M345.0 265.7 h2.4 v7.0 l-2.4 -2.4z"/></g></svg><div class="lbl" style="width:100%">dt_drm14</div></div>
<div class="clip full" style="left:906.1px;top:242.7px;width:235.5px"><svg width="235.5" height="103.4" viewBox="910.1 246.7 235.5 103.4" style="position:absolute;left:0;top:0;overflow:visible"><path d="M908.9 287.1 L912.2 287.1 L912.2 288.5 L915.3 288.5 L915.3 289.5 L922.4 289.5 L922.4 290.7 L930.7 290.7 L930.7 292.6 L935.8 292.6 L935.8 292.6 L948.1 292.6 L948.1 288.9 L951.2 288.9 L951.2 283.0 L955.3 283.0 L955.3 283.0 L958.4 283.0 L958.4 280.5 L960.9 280.5 L960.9 280.5 L962.5 280.5 L962.5 283.0 L965.6 283.0 L965.6 288.9 L967.1 288.9 L967.1 278.9 L970.7 278.9 L970.7 272.8 L971.7 272.8 L971.7 272.8 L976.8 272.8 L976.8 272.8 L978.9 272.8 L978.9 272.8 L980.9 272.8 L980.9 278.9 L983.0 278.9 L983.0 281.5 L985.0 281.5 L985.0 281.5 L987.1 281.5 L987.1 286.6 L988.6 286.6 L988.6 280.5 L992.2 280.5 L992.2 271.7 L996.9 271.7 L996.9 271.7 L998.4 271.7 L998.4 271.7 L1001.0 271.7 L1001.0 281.5 L1002.5 281.5 L1002.5 277.4 L1005.6 277.4 L1005.6 277.4 L1007.6 277.4 L1007.6 275.3 L1012.2 275.3 L1012.2 271.7 L1014.8 271.7 L1014.8 271.7 L1018.4 271.7 L1018.4 271.7 L1021.0 271.7 L1021.0 271.7 L1022.0 271.7 L1022.0 279.4 L1024.6 279.4 L1024.6 281.0 L1028.2 281.0 L1028.2 284.6 L1031.4 284.6 L1028.9 284.6 L1032.7 284.6 L1032.7 270.7 L1035.3 270.7 L1035.3 276.4 L1036.8 276.4 L1036.8 271.2 L1040.9 271.2 L1040.9 273.3 L1043.0 273.3 L1043.0 275.3 L1045.0 275.3 L1045.0 277.4 L1047.1 277.4 L1047.1 280.5 L1049.1 280.5 L1049.1 281.5 L1051.2 281.5 L1051.2 286.1 L1053.2 286.1 L1053.2 283.6 L1055.3 283.6 L1055.3 275.3 L1056.8 275.3 L1056.8 275.3 L1058.4 275.3 L1058.4 271.7 L1063.0 271.7 L1063.0 273.8 L1067.1 273.8 L1067.1 277.9 L1071.2 277.9 L1071.2 282.0 L1072.7 282.0 L1072.7 270.7 L1075.3 270.7 L1075.3 266.6 L1080.9 266.6 L1080.9 271.2 L1083.5 271.2 L1083.5 275.3 L1087.1 275.3 L1087.1 279.2 L1090.7 279.2 L1090.7 275.3 L1092.7 275.3 L1092.7 269.2 L1095.3 269.2 L1095.3 269.2 L1096.8 269.2 L1096.8 267.6 L1101.5 267.6 L1101.5 269.7 L1105.6 269.7 L1105.6 277.4 L1107.6 277.4 L1107.6 277.4 L1109.2 277.4 L1109.2 277.4 L1110.2 277.4 L1110.2 276.4 L1115.3 276.4 L1115.3 288.2 L1116.9 288.2 L1116.9 270.2 L1121.0 270.2 L1121.0 266.1 L1125.1 266.1 L1125.1 271.2 L1127.1 271.2 L1127.1 266.1 L1128.7 266.1 L1128.7 266.1 L1131.2 266.1 L1131.2 274.8 L1135.3 274.8 L1135.3 282.0 L1138.4 282.0 L1138.4 282.0 L1141.0 282.0 L1141.0 276.4 L1143.0 276.4 L1143.0 333.8 L1141.0 333.8 L1141.0 313.8 L1138.4 313.8 L1138.4 315.4 L1135.3 315.4 L1135.3 317.9 L1131.2 317.9 L1131.2 327.7 L1128.7 327.7 L1128.7 332.8 L1127.1 332.8 L1127.1 332.8 L1125.1 332.8 L1125.1 326.1 L1121.0 326.1 L1121.0 327.7 L1116.9 327.7 L1116.9 308.7 L1115.3 308.7 L1115.3 318.4 L1110.2 318.4 L1110.2 322.6 L1109.2 322.6 L1109.2 321.0 L1107.6 321.0 L1107.6 324.6 L1105.6 324.6 L1105.6 325.1 L1101.5 325.1 L1101.5 325.1 L1096.8 325.1 L1096.8 322.0 L1095.3 322.0 L1095.3 326.7 L1092.7 326.7 L1092.7 327.2 L1090.7 327.2 L1090.7 320.5 L1087.1 320.5 L1087.1 327.2 L1083.5 327.2 L1083.5 327.7 L1080.9 327.7 L1080.9 329.7 L1075.3 329.7 L1075.3 325.6 L1072.7 325.6 L1072.7 313.8 L1071.2 313.8 L1071.2 322.6 L1067.1 322.6 L1067.1 323.1 L1063.0 323.1 L1063.0 324.6 L1058.4 324.6 L1058.4 323.6 L1056.8 323.6 L1056.8 317.9 L1055.3 317.9 L1055.3 315.4 L1053.2 315.4 L1053.2 309.7 L1051.2 309.7 L1051.2 312.3 L1049.1 312.3 L1049.1 321.0 L1047.1 321.0 L1047.1 321.0 L1045.0 321.0 L1045.0 321.0 L1043.0 321.0 L1043.0 327.7 L1040.9 327.7 L1040.9 322.6 L1036.8 322.6 L1036.8 322.6 L1035.3 322.6 L1035.3 324.1 L1032.7 324.1 L1032.7 311.3 L1028.9 311.3 L1031.4 322.6 L1028.2 322.6 L1028.2 322.0 L1024.6 322.0 L1024.6 320.5 L1022.0 320.5 L1022.0 320.5 L1021.0 320.5 L1021.0 322.6 L1018.4 322.6 L1018.4 328.2 L1014.8 328.2 L1014.8 321.0 L1012.2 321.0 L1012.2 321.5 L1007.6 321.5 L1007.6 315.9 L1005.6 315.9 L1005.6 317.4 L1002.5 317.4 L1002.5 317.9 L1001.0 317.9 L1001.0 323.6 L998.4 323.6 L998.4 321.0 L996.9 321.0 L996.9 324.6 L992.2 324.6 L992.2 319.0 L988.6 319.0 L988.6 308.7 L987.1 308.7 L987.1 315.4 L985.0 315.4 L985.0 321.0 L983.0 321.0 L983.0 321.0 L980.9 321.0 L980.9 319.5 L978.9 319.5 L978.9 322.6 L976.8 322.6 L976.8 325.1 L971.7 325.1 L971.7 322.6 L970.7 322.6 L970.7 315.4 L967.1 315.4 L967.1 306.1 L965.6 306.1 L965.6 315.4 L962.5 315.4 L962.5 315.4 L960.9 315.4 L960.9 311.3 L958.4 311.3 L958.4 322.6 L955.3 322.6 L955.3 313.8 L951.2 313.8 L951.2 305.1 L948.1 305.1 L948.1 303.3 L935.8 303.3 L935.8 304.3 L930.7 304.3 L930.7 305.6 L922.4 305.6 L922.4 306.6 L915.3 306.6 L915.3 307.2 L912.2 307.2 L912.2 307.2 L908.9 307.2Z" fill="#b4dcff"/></svg><div class="lbl" style="width:235.5px">Binary Fractal - Shunya Se Anant - Sonauto.wav</div></div>
<div class="clip drum" style="left:362.1px;top:348.4px;width:56.8px"><svg width="56.8" height="103.4" viewBox="366.1 352.4 56.8 103.4" style="position:absolute;left:0;top:0;overflow:visible"><g fill="#b4dcff"><rect x="364.2" y="355.9" width="7.5" height="94.9"/><rect x="375.8" y="355.9" width="12.2" height="94.9"/><rect x="389.6" y="355.9" width="12.4" height="94.9"/><rect x="403.9" y="355.9" width="12.4" height="94.9"/><rect x="371.6" y="391.9" width="2.3" height="25.4"/><rect x="373.8" y="397.0" width="2.1" height="14.7"/><rect x="387.9" y="394.7" width="1.8" height="20.3"/><rect x="401.9" y="396.1" width="2.1" height="16.6"/><path d="M416.2 395.6 l2.0 0.5 l1.7 2.4 v12.2 l-1.7 2.4 l-2.0 .5z"/></g><g fill="#aad3f8"><rect x="368.0" y="355.9" width="0.8" height="94.9"/><rect x="376.3" y="355.9" width="0.8" height="94.9"/><rect x="380.5" y="355.9" width="0.8" height="94.9"/><rect x="384.7" y="355.9" width="0.8" height="94.9"/><rect x="393.1" y="355.9" width="0.8" height="94.9"/><rect x="397.2" y="355.9" width="0.8" height="94.9"/><rect x="405.6" y="355.9" width="0.8" height="94.9"/><rect x="409.8" y="355.9" width="0.8" height="94.9"/><rect x="414.0" y="355.9" width="0.8" height="94.9"/></g><g fill="#40719c"><rect x="366.1" y="437.6" width="3.9" height="14.0"/><rect x="380.2" y="437.6" width="3.3" height="14.0"/><rect x="393.7" y="437.6" width="4.0" height="14.0"/><rect x="408.2" y="437.6" width="3.9" height="14.0"/><path d="M408.0 371.4 h2.4 v7.0 l-2.4 -2.4z"/></g></svg><div class="lbl" style="width:100%">dt_drm14</div></div>
<div class="clip drum" style="left:436.6px;top:348.4px;width:56.0px"><svg width="56.0" height="103.4" viewBox="440.6 352.4 56.0 103.4" style="position:absolute;left:0;top:0;overflow:visible"><g fill="#b4dcff"><rect x="438.7" y="355.9" width="7.5" height="94.9"/><rect x="450.3" y="355.9" width="12.2" height="94.9"/><rect x="464.1" y="355.9" width="12.4" height="94.9"/><rect x="478.4" y="355.9" width="12.4" height="94.9"/><rect x="446.1" y="391.9" width="2.3" height="25.4"/><rect x="448.3" y="397.0" width="2.1" height="14.7"/><rect x="462.4" y="394.7" width="1.8" height="20.3"/><rect x="476.4" y="396.1" width="2.1" height="16.6"/><path d="M490.7 395.6 l2.0 0.5 l1.7 2.4 v12.2 l-1.7 2.4 l-2.0 .5z"/></g><g fill="#aad3f8"><rect x="442.5" y="355.9" width="0.8" height="94.9"/><rect x="450.8" y="355.9" width="0.8" height="94.9"/><rect x="455.0" y="355.9" width="0.8" height="94.9"/><rect x="459.2" y="355.9" width="0.8" height="94.9"/><rect x="467.6" y="355.9" width="0.8" height="94.9"/><rect x="471.7" y="355.9" width="0.8" height="94.9"/><rect x="480.1" y="355.9" width="0.8" height="94.9"/><rect x="484.3" y="355.9" width="0.8" height="94.9"/><rect x="488.5" y="355.9" width="0.8" height="94.9"/></g><g fill="#40719c"><rect x="440.6" y="437.6" width="3.9" height="14.0"/><rect x="454.7" y="437.6" width="3.3" height="14.0"/><rect x="468.2" y="437.6" width="4.0" height="14.0"/><rect x="482.7" y="437.6" width="3.9" height="14.0"/><path d="M482.5 371.4 h2.4 v7.0 l-2.4 -2.4z"/></g></svg><div class="lbl" style="width:100%">dt_drm14</div></div>
<div class="clip" style="left:614.0px;top:454.0px;width:545.0px"><svg width="545.0" height="103.4" viewBox="618.0 458.0 545.0 103.4" style="position:absolute;left:0;top:0;overflow:visible"><path d="M616.6 508.6 L617.0 508.5 L617.3 508.5 L617.7 508.3 L618.0 508.2 L618.4 508.1 L618.7 507.9 L619.1 507.9 L619.4 507.8 L619.8 507.8 L620.1 507.4 L620.5 507.4 L620.8 507.2 L621.2 507.4 L621.5 507.3 L621.9 506.9 L622.2 507.3 L622.6 507.2 L622.9 506.9 L623.3 506.9 L623.6 506.8 L624.0 506.8 L624.3 507.2 L624.7 507.1 L625.0 507.3 L625.4 507.4 L625.7 507.4 L626.1 507.7 L626.4 507.8 L626.8 508.0 L627.1 508.0 L627.5 508.0 L627.8 508.0 L628.2 508.1 L628.5 508.0 L628.9 508.0 L629.2 508.2 L629.6 508.2 L629.9 508.1 L630.3 508.1 L630.6 508.0 L631.0 508.0 L631.3 508.0 L631.7 507.9 L632.0 508.2 L632.4 508.1 L632.7 508.2 L633.1 508.1 L633.4 508.2 L633.8 508.2 L634.1 508.0 L634.5 508.0 L634.8 508.2 L635.2 508.1 L635.5 508.3 L635.9 508.1 L636.2 508.0 L636.6 508.2 L636.9 508.2 L637.3 508.1 L637.6 508.1 L638.0 508.1 L638.3 508.3 L638.7 508.2 L639.0 508.1 L639.4 508.1 L639.7 508.1 L640.1 508.1 L640.4 508.3 L640.8 508.1 L641.1 508.2 L641.5 508.2 L641.8 508.1 L642.2 508.3 L642.5 508.1 L642.9 508.2 L643.2 508.1 L643.6 508.2 L643.9 508.1 L644.3 508.2 L644.6 508.3 L645.0 508.3 L645.3 508.2 L645.7 508.3 L646.0 508.1 L646.4 508.2 L646.7 508.3 L647.1 508.3 L647.4 508.1 L647.8 508.3 L648.1 508.1 L648.5 508.2 L648.8 508.3 L649.2 508.2 L649.5 508.2 L649.9 508.1 L650.2 508.1 L650.6 508.2 L650.9 508.2 L651.3 508.3 L651.6 508.2 L652.0 508.2 L652.3 508.3 L652.7 508.2 L653.0 508.2 L653.4 508.3 L653.7 508.1 L654.1 508.1 L654.4 508.3 L654.8 508.3 L655.1 508.2 L655.5 508.2 L655.8 508.3 L656.2 508.3 L656.5 508.2 L656.9 508.4 L657.2 508.3 L657.6 508.3 L657.9 508.2 L658.3 508.1 L658.6 508.1 L659.0 508.4 L659.3 508.2 L659.7 508.3 L660.0 508.2 L660.4 508.3 L660.7 508.3 L661.1 508.2 L661.4 508.2 L661.8 508.3 L662.1 508.1 L662.5 508.2 L662.8 508.3 L663.2 508.3 L663.5 508.3 L663.9 508.2 L664.2 508.4 L664.6 508.2 L664.9 508.1 L665.3 508.2 L665.6 508.2 L666.0 508.1 L666.3 508.2 L666.7 508.2 L667.0 508.3 L667.4 508.2 L667.7 508.2 L668.1 508.4 L668.4 508.4 L668.8 508.3 L669.1 508.3 L669.5 508.3 L669.8 508.2 L670.2 508.1 L670.5 508.1 L670.9 508.4 L671.2 508.3 L671.6 508.4 L671.9 508.1 L672.3 508.3 L672.6 508.3 L673.0 508.3 L673.3 508.2 L673.7 508.4 L674.0 508.2 L674.4 508.3 L674.7 508.3 L675.1 508.4 L675.4 508.3 L675.8 508.3 L676.1 508.4 L676.5 508.4 L676.8 508.2 L677.2 508.3 L677.5 508.4 L677.9 508.4 L678.2 508.3 L678.6 508.4 L678.9 508.4 L679.3 508.3 L679.6 508.3 L680.0 508.3 L680.3 508.3 L680.7 508.3 L681.0 508.2 L681.4 508.3 L681.7 508.4 L682.1 508.4 L682.4 508.4 L682.8 508.3 L683.1 508.4 L683.5 508.3 L683.8 508.3 L684.2 508.4 L684.5 508.2 L684.9 508.4 L685.2 508.2 L685.6 508.3 L685.9 508.3 L686.3 508.1 L686.6 508.0 L687.0 507.7 L687.3 507.6 L687.7 507.5 L688.0 507.0 L688.4 506.6 L688.7 506.6 L689.1 506.6 L689.4 506.2 L689.8 506.0 L690.1 506.4 L690.5 506.2 L690.8 505.9 L691.2 506.1 L691.5 505.6 L691.9 505.7 L692.2 505.3 L692.6 498.0 L692.9 498.2 L693.3 498.3 L693.6 498.3 L694.0 497.9 L694.3 498.1 L694.7 497.9 L695.0 497.7 L695.4 498.0 L695.7 498.2 L696.1 501.7 L696.4 505.3 L696.8 505.6 L697.1 505.3 L697.5 505.4 L697.8 505.8 L698.2 505.9 L698.5 506.0 L698.9 506.4 L699.2 506.6 L699.6 506.6 L699.9 506.5 L700.3 506.9 L700.6 507.0 L701.0 506.7 L701.3 506.5 L701.7 506.6 L702.0 507.1 L702.4 506.7 L702.7 507.1 L703.1 507.0 L703.4 506.6 L703.8 506.6 L704.1 505.8 L704.5 505.7 L704.8 505.6 L705.2 505.1 L705.5 505.6 L705.9 505.0 L706.2 504.8 L706.6 504.7 L706.9 505.0 L707.3 504.7 L707.6 504.7 L708.0 504.6 L708.3 504.6 L708.7 504.6 L709.0 504.3 L709.4 503.8 L709.7 503.9 L710.1 503.6 L710.4 503.4 L710.8 503.6 L711.1 503.6 L711.5 503.2 L711.8 503.3 L712.2 503.3 L712.5 503.5 L712.9 503.3 L713.2 503.4 L713.6 503.4 L713.9 503.1 L714.3 503.4 L714.6 503.4 L715.0 502.8 L715.3 503.4 L715.7 503.2 L716.0 502.7 L716.4 503.0 L716.7 503.1 L717.1 503.3 L717.4 503.0 L717.8 503.1 L718.1 503.3 L718.5 503.3 L718.8 503.4 L719.2 503.1 L719.5 503.2 L719.9 502.9 L720.2 503.3 L720.6 503.4 L720.9 503.3 L721.3 503.3 L721.6 503.0 L722.0 503.5 L722.3 503.5 L722.7 503.4 L723.0 503.1 L723.4 503.2 L723.7 502.8 L724.1 503.1 L724.4 503.0 L724.8 502.6 L725.1 502.4 L725.5 502.6 L725.8 502.6 L726.2 502.7 L726.5 502.4 L726.9 502.1 L727.2 502.5 L727.6 502.0 L727.9 502.4 L728.3 502.0 L728.6 502.1 L729.0 502.4 L729.3 501.9 L729.7 502.0 L730.0 502.2 L730.4 502.4 L730.7 502.4 L731.1 502.3 L731.4 502.5 L731.8 502.2 L732.1 502.5 L732.5 501.9 L732.8 502.0 L733.2 502.2 L733.5 502.1 L733.9 502.4 L734.2 502.3 L734.6 502.2 L734.9 502.4 L735.3 502.2 L735.6 502.1 L736.0 502.1 L736.3 502.4 L736.7 502.5 L737.0 502.0 L737.4 502.4 L737.7 502.5 L738.1 502.2 L738.4 502.3 L738.8 502.0 L739.1 502.2 L739.5 502.2 L739.8 502.3 L740.2 501.9 L740.5 502.5 L740.9 502.4 L741.2 504.0 L741.6 506.0 L741.9 506.1 L742.3 506.0 L742.6 506.2 L743.0 505.8 L743.3 506.1 L743.7 506.1 L744.0 506.5 L744.4 506.5 L744.7 506.1 L745.1 506.2 L745.4 506.0 L745.8 506.3 L746.1 506.5 L746.5 506.6 L746.8 506.4 L747.2 506.3 L747.5 506.2 L747.9 506.5 L748.2 506.8 L748.6 506.2 L748.9 506.7 L749.3 506.2 L749.6 506.4 L750.0 506.4 L750.3 506.7 L750.7 506.4 L751.0 506.3 L751.4 506.5 L751.7 506.1 L752.1 506.4 L752.4 506.0 L752.8 506.2 L753.1 505.9 L753.5 505.8 L753.8 506.0 L754.2 505.9 L754.5 505.8 L754.9 505.8 L755.2 505.9 L755.6 505.7 L755.9 505.8 L756.3 506.2 L756.6 506.3 L757.0 506.3 L757.3 506.6 L757.7 506.5 L758.0 506.8 L758.4 506.4 L758.7 506.8 L759.1 507.0 L759.4 507.1 L759.8 506.8 L760.1 506.9 L760.5 507.3 L760.8 506.9 L761.2 507.3 L761.5 507.3 L761.9 506.9 L762.2 507.0 L762.6 507.3 L762.9 507.1 L763.3 507.0 L763.6 507.4 L764.0 507.2 L764.3 507.4 L764.7 507.1 L765.0 507.3 L765.4 507.4 L765.7 507.2 L766.1 507.3 L766.4 507.4 L766.8 507.5 L767.1 507.4 L767.5 506.9 L767.8 507.1 L768.2 507.1 L768.5 506.9 L768.9 507.0 L769.2 506.6 L769.6 506.5 L769.9 506.4 L770.3 506.3 L770.6 506.6 L771.0 506.5 L771.3 506.5 L771.7 506.1 L772.0 506.1 L772.4 506.1 L772.7 506.6 L773.1 506.8 L773.4 506.7 L773.8 506.2 L774.1 506.3 L774.5 506.9 L774.8 506.6 L775.2 506.8 L775.5 506.6 L775.9 506.7 L776.2 506.8 L776.6 506.8 L776.9 506.9 L777.3 506.6 L777.6 507.1 L778.0 507.2 L778.3 506.8 L778.7 507.0 L779.0 507.1 L779.4 507.0 L779.7 506.8 L780.1 506.8 L780.4 507.0 L780.8 506.7 L781.1 507.2 L781.5 507.2 L781.8 507.1 L782.2 507.2 L782.5 507.1 L782.9 506.9 L783.2 507.1 L783.6 507.0 L783.9 507.3 L784.3 507.2 L784.6 506.9 L785.0 507.2 L785.3 507.1 L785.7 507.1 L786.0 507.2 L786.4 507.0 L786.7 507.2 L787.1 507.2 L787.4 507.1 L787.8 507.1 L788.1 507.1 L788.5 506.9 L788.8 507.1 L789.2 506.8 L789.5 506.9 L789.9 507.0 L790.2 506.7 L790.6 506.9 L790.9 507.1 L791.3 507.1 L791.6 506.9 L792.0 507.2 L792.3 507.1 L792.7 506.9 L793.0 507.1 L793.4 507.0 L793.7 507.0 L794.1 506.9 L794.4 507.3 L794.8 507.1 L795.1 507.1 L795.5 507.1 L795.8 507.3 L796.2 506.7 L796.5 507.1 L796.9 507.1 L797.2 506.9 L797.6 506.9 L797.9 506.8 L798.3 506.8 L798.6 506.9 L799.0 506.8 L799.3 506.9 L799.7 507.2 L800.0 507.0 L800.4 507.0 L800.7 507.3 L801.1 507.0 L801.4 507.3 L801.8 507.1 L802.1 507.2 L802.5 506.8 L802.8 507.1 L803.2 507.2 L803.5 506.8 L803.9 507.3 L804.2 506.9 L804.6 507.0 L804.9 506.9 L805.3 507.1 L805.6 507.1 L806.0 506.8 L806.3 507.3 L806.7 507.0 L807.0 507.1 L807.4 507.1 L807.7 507.0 L808.1 507.0 L808.4 507.2 L808.8 507.1 L809.1 507.0 L809.5 507.2 L809.8 507.0 L810.2 506.9 L810.5 507.0 L810.9 506.9 L811.2 507.0 L811.6 507.3 L811.9 507.1 L812.3 507.4 L812.6 507.3 L813.0 506.9 L813.3 507.4 L813.7 507.4 L814.0 507.0 L814.4 507.4 L814.7 507.1 L815.1 507.2 L815.4 507.4 L815.8 507.1 L816.1 507.2 L816.5 507.4 L816.8 507.4 L817.2 507.3 L817.5 507.5 L817.9 507.5 L818.2 507.4 L818.6 507.2 L818.9 507.5 L819.3 507.4 L819.6 507.4 L820.0 507.3 L820.3 507.6 L820.7 507.4 L821.0 507.6 L821.4 507.7 L821.7 507.6 L822.1 507.6 L822.4 507.7 L822.8 507.7 L823.1 507.9 L823.5 507.8 L823.8 508.0 L824.2 508.0 L824.5 508.0 L824.9 507.8 L825.2 507.8 L825.6 508.1 L825.9 508.1 L826.3 508.1 L826.6 508.0 L827.0 508.0 L827.3 508.1 L827.7 508.1 L828.0 508.1 L828.4 508.2 L828.7 508.2 L829.1 508.1 L829.4 508.1 L829.8 508.3 L830.1 508.3 L830.5 508.3 L830.8 508.2 L831.2 508.2 L831.5 508.3 L831.9 508.3 L832.2 508.4 L832.6 508.3 L832.9 508.4 L833.3 508.3 L833.6 508.3 L834.0 508.5 L834.3 508.5 L834.7 508.5 L835.0 508.5 L835.4 508.5 L835.7 508.5 L836.1 508.5 L836.4 508.6 L836.8 508.7 L837.1 508.5 L837.5 508.6 L837.8 508.7 L838.2 508.7 L838.2 510.0 L837.8 510.0 L837.5 510.1 L837.1 510.1 L836.8 510.0 L836.4 510.1 L836.1 510.1 L835.7 510.2 L835.4 510.2 L835.0 510.2 L834.7 510.2 L834.3 510.2 L834.0 510.2 L833.6 510.3 L833.3 510.3 L832.9 510.3 L832.6 510.3 L832.2 510.3 L831.9 510.3 L831.5 510.4 L831.2 510.4 L830.8 510.4 L830.5 510.3 L830.1 510.3 L829.8 510.3 L829.4 510.5 L829.1 510.5 L828.7 510.4 L828.4 510.5 L828.0 510.5 L827.7 510.5 L827.3 510.5 L827.0 510.6 L826.6 510.6 L826.3 510.6 L825.9 510.5 L825.6 510.6 L825.2 510.8 L824.9 510.8 L824.5 510.7 L824.2 510.6 L823.8 510.7 L823.5 510.8 L823.1 510.8 L822.8 510.9 L822.4 510.9 L822.1 511.0 L821.7 511.0 L821.4 510.9 L821.0 511.0 L820.7 511.1 L820.3 511.0 L820.0 511.2 L819.6 511.2 L819.3 511.2 L818.9 511.1 L818.6 511.3 L818.2 511.2 L817.9 511.2 L817.5 511.1 L817.2 511.3 L816.8 511.3 L816.5 511.2 L816.1 511.4 L815.8 511.5 L815.4 511.2 L815.1 511.4 L814.7 511.4 L814.4 511.3 L814.0 511.6 L813.7 511.3 L813.3 511.3 L813.0 511.6 L812.6 511.4 L812.3 511.3 L811.9 511.5 L811.6 511.4 L811.2 511.6 L810.9 511.6 L810.5 511.6 L810.2 511.6 L809.8 511.6 L809.5 511.4 L809.1 511.6 L808.8 511.5 L808.4 511.4 L808.1 511.6 L807.7 511.6 L807.4 511.5 L807.0 511.5 L806.7 511.5 L806.3 511.4 L806.0 511.7 L805.6 511.5 L805.3 511.5 L804.9 511.7 L804.6 511.6 L804.2 511.7 L803.9 511.4 L803.5 511.7 L803.2 511.5 L802.8 511.5 L802.5 511.7 L802.1 511.5 L801.8 511.5 L801.4 511.4 L801.1 511.6 L800.7 511.4 L800.4 511.6 L800.0 511.6 L799.7 511.4 L799.3 511.7 L799.0 511.7 L798.6 511.6 L798.3 511.7 L797.9 511.8 L797.6 511.6 L797.2 511.7 L796.9 511.5 L796.5 511.5 L796.2 511.8 L795.8 511.4 L795.5 511.5 L795.1 511.5 L794.8 511.5 L794.4 511.4 L794.1 511.6 L793.7 511.6 L793.4 511.5 L793.0 511.5 L792.7 511.6 L792.3 511.5 L792.0 511.4 L791.6 511.7 L791.3 511.5 L790.9 511.5 L790.6 511.6 L790.2 511.7 L789.9 511.6 L789.5 511.6 L789.2 511.7 L788.8 511.5 L788.5 511.6 L788.1 511.4 L787.8 511.4 L787.4 511.5 L787.1 511.4 L786.7 511.4 L786.4 511.6 L786.0 511.4 L785.7 511.4 L785.3 511.4 L785.0 511.4 L784.6 511.6 L784.3 511.4 L783.9 511.3 L783.6 511.5 L783.2 511.5 L782.9 511.6 L782.5 511.5 L782.2 511.4 L781.8 511.4 L781.5 511.4 L781.1 511.4 L780.8 511.7 L780.4 511.5 L780.1 511.6 L779.7 511.6 L779.4 511.5 L779.0 511.4 L778.7 511.5 L778.3 511.6 L778.0 511.4 L777.6 511.5 L777.3 511.8 L776.9 511.6 L776.6 511.7 L776.2 511.7 L775.9 511.8 L775.5 511.9 L775.2 511.8 L774.8 511.9 L774.5 511.8 L774.1 512.2 L773.8 512.3 L773.4 511.9 L773.1 511.9 L772.7 512.0 L772.4 512.4 L772.0 512.5 L771.7 512.4 L771.3 512.1 L771.0 512.1 L770.6 512.0 L770.3 512.2 L769.9 512.1 L769.6 512.0 L769.2 511.9 L768.9 511.6 L768.5 511.7 L768.2 511.5 L767.8 511.5 L767.5 511.6 L767.1 511.2 L766.8 511.2 L766.4 511.2 L766.1 511.3 L765.7 511.4 L765.4 511.2 L765.0 511.3 L764.7 511.4 L764.3 511.2 L764.0 511.4 L763.6 511.2 L763.3 511.5 L762.9 511.5 L762.6 511.4 L762.2 511.5 L761.9 511.6 L761.5 511.4 L761.2 511.3 L760.8 511.7 L760.5 511.4 L760.1 511.7 L759.8 511.7 L759.4 511.6 L759.1 511.7 L758.7 511.8 L758.4 512.1 L758.0 511.9 L757.7 512.1 L757.3 512.1 L757.0 512.3 L756.6 512.3 L756.3 512.4 L755.9 512.7 L755.6 512.8 L755.2 512.7 L754.9 512.8 L754.5 512.8 L754.2 512.7 L753.8 512.6 L753.5 512.8 L753.1 512.7 L752.8 512.5 L752.4 512.7 L752.1 512.3 L751.7 512.6 L751.4 512.3 L751.0 512.4 L750.7 512.4 L750.3 512.1 L750.0 512.3 L749.6 512.4 L749.3 512.5 L748.9 512.2 L748.6 512.5 L748.2 512.2 L747.9 512.3 L747.5 512.6 L747.2 512.6 L746.8 512.5 L746.5 512.3 L746.1 512.4 L745.8 512.6 L745.4 512.8 L745.1 512.7 L744.7 512.8 L744.4 512.5 L744.0 512.5 L743.7 512.8 L743.3 512.8 L743.0 513.1 L742.6 512.8 L742.3 512.9 L741.9 512.9 L741.6 513.1 L741.2 515.0 L740.9 516.7 L740.5 516.8 L740.2 517.2 L739.8 516.9 L739.5 517.0 L739.1 516.9 L738.8 517.1 L738.4 516.9 L738.1 516.9 L737.7 516.7 L737.4 516.7 L737.0 517.0 L736.7 516.7 L736.3 516.7 L736.0 516.9 L735.6 516.9 L735.3 516.8 L734.9 516.6 L734.6 516.8 L734.2 516.7 L733.9 516.7 L733.5 516.9 L733.2 516.7 L732.8 516.9 L732.5 516.9 L732.1 516.5 L731.8 516.7 L731.4 516.5 L731.1 516.6 L730.7 516.5 L730.4 516.6 L730.0 516.7 L729.7 516.8 L729.3 516.8 L729.0 516.5 L728.6 516.7 L728.3 516.8 L727.9 516.4 L727.6 516.8 L727.2 516.4 L726.9 516.7 L726.5 516.5 L726.2 516.3 L725.8 516.4 L725.5 516.4 L725.1 516.5 L724.8 516.3 L724.4 516.1 L724.1 516.0 L723.7 516.3 L723.4 516.0 L723.0 516.1 L722.7 515.8 L722.3 515.8 L722.0 515.8 L721.6 516.1 L721.3 515.9 L720.9 515.9 L720.6 515.8 L720.2 515.9 L719.9 516.1 L719.5 515.9 L719.2 516.0 L718.8 515.8 L718.5 515.9 L718.1 515.8 L717.8 516.0 L717.4 516.1 L717.1 515.8 L716.7 515.9 L716.4 516.0 L716.0 516.2 L715.7 515.9 L715.3 515.7 L715.0 516.1 L714.6 515.7 L714.3 515.7 L713.9 515.8 L713.6 515.6 L713.2 515.7 L712.9 515.7 L712.5 515.6 L712.2 515.7 L711.8 515.7 L711.5 515.7 L711.1 515.4 L710.8 515.4 L710.4 515.5 L710.1 515.3 L709.7 515.1 L709.4 515.1 L709.0 514.7 L708.7 514.5 L708.3 514.4 L708.0 514.4 L707.6 514.3 L707.3 514.3 L706.9 514.1 L706.6 514.2 L706.2 514.1 L705.9 513.9 L705.5 513.5 L705.2 513.8 L704.8 513.3 L704.5 513.2 L704.1 512.9 L703.8 512.2 L703.4 512.1 L703.1 511.6 L702.7 511.6 L702.4 511.8 L702.0 511.6 L701.7 511.9 L701.3 511.9 L701.0 511.8 L700.6 511.6 L700.3 511.7 L699.9 512.0 L699.6 511.9 L699.2 511.9 L698.9 512.1 L698.5 512.4 L698.2 512.6 L697.8 512.7 L697.5 513.0 L697.1 513.1 L696.8 513.0 L696.4 513.3 L696.1 517.5 L695.7 521.6 L695.4 521.8 L695.0 522.0 L694.7 521.9 L694.3 521.8 L694.0 521.9 L693.6 521.6 L693.3 521.6 L692.9 521.7 L692.6 521.8 L692.2 513.1 L691.9 512.8 L691.5 512.9 L691.2 512.6 L690.8 512.7 L690.5 512.5 L690.1 512.3 L689.8 512.6 L689.4 512.5 L689.1 512.2 L688.7 512.2 L688.4 512.1 L688.0 511.8 L687.7 511.3 L687.3 511.2 L687.0 511.1 L686.6 510.8 L686.3 510.7 L685.9 510.5 L685.6 510.5 L685.2 510.6 L684.9 510.5 L684.5 510.6 L684.2 510.4 L683.8 510.5 L683.5 510.5 L683.1 510.5 L682.8 510.5 L682.4 510.5 L682.1 510.4 L681.7 510.4 L681.4 510.5 L681.0 510.6 L680.7 510.5 L680.3 510.5 L680.0 510.5 L679.6 510.5 L679.3 510.5 L678.9 510.4 L678.6 510.4 L678.2 510.5 L677.9 510.4 L677.5 510.4 L677.2 510.4 L676.8 510.5 L676.5 510.4 L676.1 510.4 L675.8 510.4 L675.4 510.4 L675.1 510.4 L674.7 510.4 L674.4 510.5 L674.0 510.6 L673.7 510.4 L673.3 510.5 L673.0 510.4 L672.6 510.5 L672.3 510.4 L671.9 510.6 L671.6 510.4 L671.2 510.4 L670.9 510.4 L670.5 510.6 L670.2 510.5 L669.8 510.5 L669.5 510.4 L669.1 510.4 L668.8 510.4 L668.4 510.4 L668.1 510.4 L667.7 510.5 L667.4 510.5 L667.0 510.4 L666.7 510.5 L666.3 510.5 L666.0 510.5 L665.6 510.5 L665.3 510.5 L664.9 510.5 L664.6 510.5 L664.2 510.4 L663.9 510.5 L663.5 510.4 L663.2 510.4 L662.8 510.4 L662.5 510.5 L662.1 510.5 L661.8 510.4 L661.4 510.5 L661.1 510.5 L660.7 510.4 L660.4 510.4 L660.0 510.5 L659.7 510.4 L659.3 510.5 L659.0 510.4 L658.6 510.5 L658.3 510.5 L657.9 510.5 L657.6 510.4 L657.2 510.4 L656.9 510.4 L656.5 510.5 L656.2 510.4 L655.8 510.4 L655.5 510.5 L655.1 510.5 L654.8 510.4 L654.4 510.4 L654.1 510.5 L653.7 510.5 L653.4 510.4 L653.0 510.4 L652.7 510.4 L652.3 510.3 L652.0 510.4 L651.6 510.4 L651.3 510.4 L650.9 510.5 L650.6 510.4 L650.2 510.5 L649.9 510.5 L649.5 510.5 L649.2 510.5 L648.8 510.4 L648.5 510.5 L648.1 510.5 L647.8 510.3 L647.4 510.5 L647.1 510.4 L646.7 510.4 L646.4 510.4 L646.0 510.5 L645.7 510.3 L645.3 510.4 L645.0 510.4 L644.6 510.3 L644.3 510.5 L643.9 510.5 L643.6 510.4 L643.2 510.5 L642.9 510.4 L642.5 510.5 L642.2 510.4 L641.8 510.5 L641.5 510.4 L641.1 510.4 L640.8 510.5 L640.4 510.3 L640.1 510.5 L639.7 510.5 L639.4 510.5 L639.0 510.5 L638.7 510.4 L638.3 510.3 L638.0 510.5 L637.6 510.5 L637.3 510.5 L636.9 510.4 L636.6 510.4 L636.2 510.5 L635.9 510.5 L635.5 510.4 L635.2 510.5 L634.8 510.4 L634.5 510.5 L634.1 510.6 L633.8 510.4 L633.4 510.4 L633.1 510.5 L632.7 510.4 L632.4 510.5 L632.0 510.5 L631.7 510.6 L631.3 510.6 L631.0 510.6 L630.6 510.6 L630.3 510.5 L629.9 510.5 L629.6 510.5 L629.2 510.5 L628.9 510.6 L628.5 510.6 L628.2 510.5 L627.8 510.6 L627.5 510.6 L627.1 510.6 L626.8 510.6 L626.4 510.8 L626.1 510.9 L625.7 511.1 L625.4 511.2 L625.0 511.3 L624.7 511.4 L624.3 511.4 L624.0 511.7 L623.6 511.7 L623.3 511.7 L622.9 511.7 L622.6 511.5 L622.2 511.4 L621.9 511.7 L621.5 511.3 L621.2 511.2 L620.8 511.3 L620.5 511.2 L620.1 511.1 L619.8 510.8 L619.4 510.8 L619.1 510.7 L618.7 510.7 L618.4 510.5 L618.0 510.4 L617.7 510.3 L617.3 510.1 L617.0 510.1 L616.6 510.0Z" fill="#b4dcff"/><path d="M838.3 507.5 L840.4 507.5 L840.4 480.5 L842.5 480.5 L842.5 486.4 L844.6 486.4 L844.6 476.7 L846.7 476.7 L846.7 478.2 L848.8 478.2 L848.8 477.3 L850.8 477.3 L850.8 478.8 L852.9 478.8 L852.9 478.0 L855.0 478.0 L855.0 478.1 L857.1 478.1 L857.1 480.2 L859.2 480.2 L859.2 480.6 L861.3 480.6 L861.3 482.1 L863.4 482.1 L863.4 495.5 L865.5 495.5 L865.5 494.4 L867.6 494.4 L867.6 478.7 L869.7 478.7 L869.7 478.1 L871.7 478.1 L871.7 476.2 L873.8 476.2 L873.8 473.1 L875.9 473.1 L875.9 476.7 L878.0 476.7 L878.0 478.9 L880.1 478.9 L880.1 479.3 L882.2 479.3 L882.2 477.3 L884.3 477.3 L884.3 478.1 L886.4 478.1 L886.4 473.3 L888.5 473.3 L888.5 503.5 L890.6 503.5 L890.6 487.3 L892.6 487.3 L892.6 492.6 L894.7 492.6 L894.7 473.8 L896.8 473.8 L896.8 472.0 L898.9 472.0 L898.9 470.1 L901.0 470.1 L901.0 471.8 L903.1 471.8 L903.1 483.8 L905.2 483.8 L905.2 486.9 L907.3 486.9 L907.3 506.2 L909.4 506.2 L909.4 466.0 L911.5 466.0 L911.5 466.9 L913.5 466.9 L913.5 479.1 L915.6 479.1 L915.6 472.7 L917.7 472.7 L917.7 471.8 L919.8 471.8 L919.8 483.8 L921.9 483.8 L921.9 471.4 L924.0 471.4 L924.0 472.2 L926.1 472.2 L926.1 471.9 L928.2 471.9 L928.2 472.5 L930.3 472.5 L930.3 476.7 L932.4 476.7 L932.4 500.8 L934.4 500.8 L934.4 501.1 L936.5 501.1 L936.5 497.7 L938.6 497.7 L938.6 503.5 L940.7 503.5 L940.7 478.4 L942.8 478.4 L942.8 469.5 L944.9 469.5 L944.9 466.1 L947.0 466.1 L947.0 464.7 L949.1 464.7 L949.1 475.8 L951.2 475.8 L951.2 468.7 L953.3 468.7 L953.3 471.4 L955.3 471.4 L955.3 476.7 L957.4 476.7 L957.4 479.0 L959.5 479.0 L959.5 478.8 L961.6 478.8 L961.6 480.3 L963.7 480.3 L963.7 505.1 L965.8 505.1 L965.8 506.2 L967.9 506.2 L967.9 489.6 L970.0 489.6 L970.0 468.4 L972.1 468.4 L972.1 472.9 L974.2 472.9 L974.2 463.4 L976.2 463.4 L976.2 477.0 L978.3 477.0 L978.3 471.5 L980.4 471.5 L980.4 468.4 L982.5 468.4 L982.5 473.5 L984.6 473.5 L984.6 484.8 L986.7 484.8 L986.7 490.0 L988.8 490.0 L988.8 492.8 L990.9 492.8 L990.9 476.8 L993.0 476.8 L993.0 468.0 L995.1 468.0 L995.1 465.5 L997.1 465.5 L997.1 463.4 L999.2 463.4 L999.2 479.1 L1001.3 479.1 L1001.3 465.5 L1003.4 465.5 L1003.4 479.7 L1005.5 479.7 L1005.5 479.4 L1007.6 479.4 L1007.6 496.2 L1009.7 496.2 L1009.7 483.1 L1011.8 483.1 L1011.8 486.7 L1013.9 486.7 L1013.9 498.1 L1016.0 498.1 L1016.0 503.0 L1018.0 503.0 L1018.0 499.5 L1020.1 499.5 L1020.1 483.3 L1022.2 483.3 L1022.2 476.0 L1024.3 476.0 L1024.3 472.3 L1026.4 472.3 L1026.4 472.7 L1028.5 472.7 L1028.5 475.4 L1030.6 475.4 L1030.6 474.8 L1032.7 474.8 L1032.7 476.7 L1034.8 476.7 L1034.8 478.8 L1036.9 478.8 L1036.9 479.7 L1038.9 479.7 L1038.9 483.0 L1041.0 483.0 L1041.0 490.1 L1043.1 490.1 L1043.1 478.8 L1045.2 478.8 L1045.2 479.4 L1047.3 479.4 L1047.3 480.8 L1049.4 480.8 L1049.4 485.2 L1051.5 485.2 L1051.5 480.8 L1053.6 480.8 L1053.6 479.5 L1055.7 479.5 L1055.7 506.2 L1057.8 506.2 L1057.8 488.1 L1059.8 488.1 L1059.8 482.2 L1061.9 482.2 L1061.9 480.8 L1064.0 480.8 L1064.0 503.5 L1066.1 503.5 L1066.1 489.3 L1068.2 489.3 L1068.2 472.0 L1070.3 472.0 L1070.3 469.0 L1072.4 469.0 L1072.4 465.5 L1074.5 465.5 L1074.5 468.7 L1076.6 468.7 L1076.6 465.5 L1078.7 465.5 L1078.7 465.5 L1080.7 465.5 L1080.7 463.4 L1082.8 463.4 L1082.8 466.2 L1084.9 466.2 L1084.9 487.4 L1087.0 487.4 L1087.0 489.0 L1089.1 489.0 L1089.1 476.8 L1091.2 476.8 L1091.2 478.4 L1093.3 478.4 L1093.3 478.1 L1095.4 478.1 L1095.4 489.9 L1097.5 489.9 L1097.5 481.2 L1099.5 481.2 L1099.5 490.1 L1101.6 490.1 L1101.6 479.0 L1103.7 479.0 L1103.7 479.4 L1105.8 479.4 L1105.8 481.5 L1107.9 481.5 L1107.9 490.1 L1110.0 490.1 L1110.0 483.5 L1112.1 483.5 L1112.1 478.2 L1114.2 478.2 L1114.2 471.0 L1116.3 471.0 L1116.3 476.7 L1118.4 476.7 L1118.4 478.5 L1120.4 478.5 L1120.4 477.3 L1122.5 477.3 L1122.5 487.2 L1124.6 487.2 L1124.6 475.6 L1126.7 475.6 L1126.7 470.5 L1128.8 470.5 L1128.8 476.7 L1130.9 476.7 L1130.9 478.1 L1133.0 478.1 L1133.0 478.5 L1135.1 478.5 L1135.1 492.8 L1137.2 492.8 L1137.2 501.3 L1139.3 501.3 L1139.3 493.7 L1141.3 493.7 L1141.3 498.1 L1143.4 498.1 L1143.4 496.5 L1145.5 496.5 L1145.5 482.1 L1147.6 482.1 L1147.6 481.1 L1149.7 481.1 L1149.7 500.8 L1151.8 500.8 L1151.8 498.6 L1153.9 498.6 L1153.9 498.1 L1156.0 498.1 L1156.0 507.8 L1158.1 507.8 L1158.1 497.5 L1160.2 497.5 L1160.2 507.5 L1162.2 507.5 L1162.2 512.0 L1160.2 512.0 L1160.2 513.2 L1158.1 513.2 L1158.1 510.8 L1156.0 510.8 L1156.0 516.9 L1153.9 516.9 L1153.9 510.8 L1151.8 510.8 L1151.8 522.2 L1149.7 522.2 L1149.7 528.5 L1147.6 528.5 L1147.6 522.2 L1145.5 522.2 L1145.5 531.8 L1143.4 531.8 L1143.4 527.6 L1141.3 527.6 L1141.3 511.8 L1139.3 511.8 L1139.3 527.6 L1137.2 527.6 L1137.2 541.8 L1135.1 541.8 L1135.1 540.3 L1133.0 540.3 L1133.0 539.3 L1130.9 539.3 L1130.9 551.6 L1128.8 551.6 L1128.8 550.1 L1126.7 550.1 L1126.7 531.7 L1124.6 531.7 L1124.6 535.6 L1122.5 535.6 L1122.5 537.2 L1120.4 537.2 L1120.4 532.9 L1118.4 532.9 L1118.4 535.1 L1116.3 535.1 L1116.3 533.3 L1114.2 533.3 L1114.2 523.5 L1112.1 523.5 L1112.1 519.4 L1110.0 519.4 L1110.0 535.6 L1107.9 535.6 L1107.9 535.0 L1105.8 535.0 L1105.8 533.9 L1103.7 533.9 L1103.7 533.2 L1101.6 533.2 L1101.6 524.9 L1099.5 524.9 L1099.5 540.1 L1097.5 540.1 L1097.5 544.9 L1095.4 544.9 L1095.4 545.1 L1093.3 545.1 L1093.3 541.6 L1091.2 541.6 L1091.2 538.3 L1089.1 538.3 L1089.1 544.8 L1087.0 544.8 L1087.0 551.1 L1084.9 551.1 L1084.9 543.2 L1082.8 543.2 L1082.8 553.0 L1080.7 553.0 L1080.7 538.3 L1078.7 538.3 L1078.7 554.5 L1076.6 554.5 L1076.6 555.0 L1074.5 555.0 L1074.5 544.6 L1072.4 544.6 L1072.4 555.6 L1070.3 555.6 L1070.3 555.0 L1068.2 555.0 L1068.2 534.6 L1066.1 534.6 L1066.1 514.2 L1064.0 514.2 L1064.0 510.8 L1061.9 510.8 L1061.9 510.8 L1059.8 510.8 L1059.8 512.1 L1057.8 512.1 L1057.8 512.0 L1055.7 512.0 L1055.7 534.6 L1053.6 534.6 L1053.6 535.6 L1051.5 535.6 L1051.5 541.9 L1049.4 541.9 L1049.4 544.9 L1047.3 544.9 L1047.3 533.4 L1045.2 533.4 L1045.2 527.1 L1043.1 527.1 L1043.1 541.5 L1041.0 541.5 L1041.0 539.8 L1038.9 539.8 L1038.9 538.3 L1036.9 538.3 L1036.9 553.9 L1034.8 553.9 L1034.8 540.4 L1032.7 540.4 L1032.7 550.3 L1030.6 550.3 L1030.6 535.2 L1028.5 535.2 L1028.5 549.8 L1026.4 549.8 L1026.4 538.3 L1024.3 538.3 L1024.3 542.3 L1022.2 542.3 L1022.2 536.5 L1020.1 536.5 L1020.1 523.7 L1018.0 523.7 L1018.0 518.2 L1016.0 518.2 L1016.0 551.1 L1013.9 551.1 L1013.9 554.3 L1011.8 554.3 L1011.8 556.0 L1009.7 556.0 L1009.7 554.4 L1007.6 554.4 L1007.6 533.9 L1005.5 533.9 L1005.5 540.9 L1003.4 540.9 L1003.4 556.0 L1001.3 556.0 L1001.3 553.1 L999.2 553.1 L999.2 552.7 L997.1 552.7 L997.1 540.8 L995.1 540.8 L995.1 555.6 L993.0 555.6 L993.0 554.1 L990.9 554.1 L990.9 552.0 L988.8 552.0 L988.8 539.6 L986.7 539.6 L986.7 535.8 L984.6 535.8 L984.6 522.2 L982.5 522.2 L982.5 538.0 L980.4 538.0 L980.4 538.3 L978.3 538.3 L978.3 526.8 L976.2 526.8 L976.2 541.4 L974.2 541.4 L974.2 543.2 L972.1 543.2 L972.1 543.6 L970.0 543.6 L970.0 529.6 L967.9 529.6 L967.9 514.2 L965.8 514.2 L965.8 539.2 L963.7 539.2 L963.7 548.1 L961.6 548.1 L961.6 543.6 L959.5 543.6 L959.5 530.9 L957.4 530.9 L957.4 550.0 L955.3 550.0 L955.3 545.6 L953.3 545.6 L953.3 547.6 L951.2 547.6 L951.2 536.9 L949.1 536.9 L949.1 538.6 L947.0 538.6 L947.0 538.3 L944.9 538.3 L944.9 542.8 L942.8 542.8 L942.8 546.9 L940.7 546.9 L940.7 548.8 L938.6 548.8 L938.6 546.9 L936.5 546.9 L936.5 547.6 L934.4 547.6 L934.4 537.6 L932.4 537.6 L932.4 516.9 L930.3 516.9 L930.3 539.4 L928.2 539.4 L928.2 536.1 L926.1 536.1 L926.1 543.6 L924.0 543.6 L924.0 546.3 L921.9 546.3 L921.9 547.8 L919.8 547.8 L919.8 549.5 L917.7 549.5 L917.7 546.0 L915.6 546.0 L915.6 538.3 L913.5 538.3 L913.5 534.5 L911.5 534.5 L911.5 530.7 L909.4 530.7 L909.4 512.9 L907.3 512.9 L907.3 527.9 L905.2 527.9 L905.2 531.7 L903.1 531.7 L903.1 536.9 L901.0 536.9 L901.0 529.5 L898.9 529.5 L898.9 526.8 L896.8 526.8 L896.8 543.6 L894.7 543.6 L894.7 546.7 L892.6 546.7 L892.6 550.3 L890.6 550.3 L890.6 554.4 L888.5 554.4 L888.5 553.0 L886.4 553.0 L886.4 553.6 L884.3 553.6 L884.3 541.9 L882.2 541.9 L882.2 539.6 L880.1 539.6 L880.1 541.4 L878.0 541.4 L878.0 538.1 L875.9 538.1 L875.9 522.5 L873.8 522.5 L873.8 535.6 L871.7 535.6 L871.7 535.6 L869.7 535.6 L869.7 534.5 L867.6 534.5 L867.6 530.7 L865.5 530.7 L865.5 530.2 L863.4 530.2 L863.4 539.1 L861.3 539.1 L861.3 538.3 L859.2 538.3 L859.2 546.8 L857.1 546.8 L857.1 531.2 L855.0 531.2 L855.0 544.9 L852.9 544.9 L852.9 553.0 L850.8 553.0 L850.8 554.4 L848.8 554.4 L848.8 543.6 L846.7 543.6 L846.7 532.8 L844.6 532.8 L844.6 543.3 L842.5 543.3 L842.5 530.2 L840.4 530.2 L840.4 512.9 L838.3 512.9Z" fill="#b4dcff"/></svg><div class="lbl" style="width:279.0px">Binary Fractal - Glitch Meridian - Sonauto.wav</div></div>
<div class="clip" style="left:80.2px;top:559.7px;width:634.3px"><svg width="634.3" height="103.4" viewBox="84.2 563.7 634.3 103.4" style="position:absolute;left:0;top:0;overflow:visible"><path d="M82.8 582.4 L87.0 582.4 L87.0 598.7 L91.2 598.7 L91.2 596.4 L95.3 596.4 L95.3 592.0 L99.5 592.0 L99.5 599.1 L103.7 599.1 L103.7 601.5 L107.9 601.5 L107.9 591.0 L112.1 591.0 L112.1 600.5 L116.2 600.5 L116.2 599.0 L120.4 599.0 L120.4 585.5 L124.6 585.5 L124.6 597.0 L128.8 597.0 L128.8 601.5 L133.0 601.5 L133.0 586.0 L137.1 586.0 L137.1 600.6 L141.3 600.6 L141.3 588.0 L145.5 588.0 L145.5 600.3 L149.7 600.3 L149.7 596.0 L153.9 596.0 L153.9 599.9 L158.0 599.9 L158.0 592.0 L162.2 592.0 L162.2 600.9 L166.4 600.9 L166.4 596.9 L170.6 596.9 L170.6 600.7 L174.8 600.7 L174.8 597.7 L178.9 597.7 L178.9 596.5 L183.1 596.5 L183.1 586.2 L187.3 586.2 L187.3 591.4 L191.5 591.4 L191.5 586.3 L195.7 586.3 L195.7 592.3 L199.8 592.3 L199.8 587.8 L204.0 587.8 L204.0 591.9 L208.2 591.9 L208.2 586.2 L212.4 586.2 L212.4 592.3 L216.6 592.3 L216.6 589.3 L220.7 589.3 L220.7 592.0 L224.9 592.0 L224.9 587.0 L229.1 587.0 L229.1 592.9 L233.3 592.9 L233.3 593.1 L237.5 593.1 L237.5 595.9 L241.6 595.9 L241.6 590.9 L245.8 590.9 L245.8 596.7 L250.0 596.7 L250.0 590.9 L254.2 590.9 L254.2 596.1 L258.4 596.1 L258.4 592.0 L262.5 592.0 L262.5 596.0 L266.7 596.0 L266.7 591.2 L270.9 591.2 L270.9 595.5 L275.1 595.5 L275.1 592.9 L279.3 592.9 L279.3 594.1 L283.4 594.1 L283.4 587.2 L287.6 587.2 L287.6 591.4 L291.8 591.4 L291.8 587.9 L296.0 587.9 L296.0 590.6 L300.2 590.6 L300.2 587.8 L304.3 587.8 L304.3 591.1 L308.5 591.1 L308.5 586.6 L312.7 586.6 L312.7 591.5 L316.9 591.5 L316.9 587.0 L321.1 587.0 L321.1 590.9 L325.2 590.9 L325.2 586.0 L329.4 586.0 L329.4 591.9 L333.6 591.9 L333.6 587.6 L337.8 587.6 L337.8 590.9 L342.0 590.9 L342.0 586.1 L346.1 586.1 L346.1 590.9 L350.3 590.9 L350.3 587.8 L354.5 587.8 L354.5 591.9 L358.7 591.9 L358.7 587.9 L362.9 587.9 L362.9 592.1 L367.0 592.1 L367.0 589.7 L371.2 589.7 L371.2 591.9 L375.4 591.9 L375.4 589.0 L379.6 589.0 L379.6 595.1 L383.8 595.1 L383.8 592.7 L387.9 592.7 L387.9 597.0 L392.1 597.0 L392.1 597.3 L396.3 597.3 L396.3 599.8 L400.5 599.8 L400.5 597.5 L404.7 597.5 L404.7 600.2 L408.8 600.2 L408.8 597.7 L413.0 597.7 L413.0 599.8 L417.2 599.8 L417.2 597.3 L421.4 597.3 L421.4 596.8 L425.6 596.8 L425.6 595.4 L429.7 595.4 L429.7 596.4 L433.9 596.4 L433.9 595.4 L438.1 595.4 L438.1 600.6 L442.3 600.6 L442.3 602.4 L446.5 602.4 L446.5 603.5 L450.6 603.5 L450.6 602.5 L454.8 602.5 L454.8 603.5 L459.0 603.5 L459.0 601.4 L463.2 601.4 L463.2 603.4 L467.4 603.4 L467.4 602.1 L471.5 602.1 L471.5 591.3 L475.7 591.3 L475.7 587.1 L479.9 587.1 L479.9 590.4 L484.1 590.4 L484.1 579.5 L488.3 579.5 L488.3 588.5 L492.4 588.5 L492.4 584.8 L496.6 584.8 L496.6 580.0 L500.8 580.0 L500.8 586.5 L505.0 586.5 L505.0 589.6 L509.2 589.6 L509.2 585.0 L513.3 585.0 L513.3 589.2 L517.5 589.2 L517.5 585.6 L521.7 585.6 L521.7 589.8 L525.9 589.8 L525.9 587.6 L530.1 587.6 L530.1 590.4 L534.2 590.4 L534.2 585.5 L538.4 585.5 L538.4 591.1 L542.6 591.1 L542.6 586.7 L546.8 586.7 L546.8 590.7 L551.0 590.7 L551.0 587.4 L555.1 587.4 L555.1 591.0 L559.3 591.0 L559.3 588.9 L563.5 588.9 L563.5 591.1 L567.7 591.1 L567.7 588.0 L571.9 588.0 L571.9 596.6 L576.0 596.6 L576.0 589.0 L580.2 589.0 L580.2 603.4 L584.4 603.4 L584.4 602.1 L588.6 602.1 L588.6 597.0 L592.8 597.0 L592.8 601.7 L596.9 601.7 L596.9 603.1 L601.1 603.1 L601.1 596.4 L605.3 596.4 L605.3 595.0 L609.5 595.0 L609.5 597.8 L613.7 597.8 L613.7 589.5 L617.8 589.5 L617.8 597.1 L622.0 597.1 L622.0 601.8 L626.2 601.8 L626.2 597.8 L630.4 597.8 L630.4 601.3 L634.6 601.3 L634.6 597.9 L638.7 597.9 L638.7 601.9 L642.9 601.9 L642.9 602.1 L647.1 602.1 L647.1 603.2 L651.3 603.2 L651.3 601.7 L655.5 601.7 L655.5 602.7 L659.6 602.7 L659.6 598.4 L663.8 598.4 L663.8 599.6 L668.0 599.6 L668.0 597.3 L672.2 597.3 L672.2 599.4 L676.4 599.4 L676.4 597.8 L680.5 597.8 L680.5 599.0 L684.7 599.0 L684.7 597.7 L688.9 597.7 L688.9 598.7 L693.1 598.7 L693.1 597.2 L697.3 597.2 L697.3 598.4 L701.4 598.4 L701.4 597.1 L705.6 597.1 L705.6 598.2 L709.8 598.2 L709.8 599.9 L714.0 599.9 L714.0 605.5 L718.2 605.5 L718.2 609.6 L718.5 609.6 L718.5 620.4 L718.2 620.4 L718.2 624.6 L714.0 624.6 L714.0 629.4 L709.8 629.4 L709.8 632.2 L705.6 632.2 L705.6 633.8 L701.4 633.8 L701.4 632.3 L697.3 632.3 L697.3 633.0 L693.1 633.0 L693.1 631.9 L688.9 631.9 L688.9 631.2 L684.7 631.2 L684.7 631.0 L680.5 631.0 L680.5 633.8 L676.4 633.8 L676.4 632.0 L672.2 632.0 L672.2 632.8 L668.0 632.8 L668.0 631.2 L663.8 631.2 L663.8 630.9 L659.6 630.9 L659.6 628.2 L655.5 628.2 L655.5 628.7 L651.3 628.7 L651.3 627.5 L647.1 627.5 L647.1 629.3 L642.9 629.3 L642.9 630.2 L638.7 630.2 L638.7 633.7 L634.6 633.7 L634.6 630.4 L630.4 630.4 L630.4 633.8 L626.2 633.8 L626.2 629.6 L622.0 629.6 L622.0 631.0 L617.8 631.0 L617.8 640.0 L613.7 640.0 L613.7 634.0 L609.5 634.0 L609.5 636.0 L605.3 636.0 L605.3 633.0 L601.1 633.0 L601.1 628.0 L596.9 628.0 L596.9 626.9 L592.8 626.9 L592.8 637.0 L588.6 637.0 L588.6 628.6 L584.4 628.6 L584.4 627.0 L580.2 627.0 L580.2 641.0 L576.0 641.0 L576.0 635.0 L571.9 635.0 L571.9 641.5 L567.7 641.5 L567.7 658.5 L563.5 658.5 L563.5 643.2 L559.3 643.2 L559.3 637.9 L555.1 637.9 L555.1 641.5 L551.0 641.5 L551.0 639.8 L546.8 639.8 L546.8 637.7 L542.6 637.7 L542.6 639.2 L538.4 639.2 L538.4 638.1 L534.2 638.1 L534.2 639.9 L530.1 639.9 L530.1 636.6 L525.9 636.6 L525.9 639.9 L521.7 639.9 L521.7 638.1 L517.5 638.1 L517.5 638.5 L513.3 638.5 L513.3 647.0 L509.2 647.0 L509.2 637.1 L505.0 637.1 L505.0 641.1 L500.8 641.1 L500.8 644.0 L496.6 644.0 L496.6 642.0 L492.4 642.0 L492.4 637.9 L488.3 637.9 L488.3 646.0 L484.1 646.0 L484.1 636.4 L479.9 636.4 L479.9 641.9 L475.7 641.9 L475.7 635.6 L471.5 635.6 L471.5 628.7 L467.4 628.7 L467.4 627.7 L463.2 627.7 L463.2 628.4 L459.0 628.4 L459.0 627.9 L454.8 627.9 L454.8 627.8 L450.6 627.8 L450.6 628.2 L446.5 628.2 L446.5 627.8 L442.3 627.8 L442.3 629.9 L438.1 629.9 L438.1 634.5 L433.9 634.5 L433.9 633.8 L429.7 633.8 L429.7 635.0 L425.6 635.0 L425.6 633.2 L421.4 633.2 L421.4 633.7 L417.2 633.7 L417.2 631.3 L413.0 631.3 L413.0 634.7 L408.8 634.7 L408.8 633.0 L404.7 633.0 L404.7 633.7 L400.5 633.7 L400.5 633.6 L396.3 633.6 L396.3 633.7 L392.1 633.7 L392.1 636.2 L387.9 636.2 L387.9 639.1 L383.8 639.1 L383.8 639.0 L379.6 639.0 L379.6 641.6 L375.4 641.6 L375.4 640.9 L371.2 640.9 L371.2 644.5 L367.0 644.5 L367.0 640.9 L362.9 640.9 L362.9 646.4 L358.7 646.4 L358.7 643.1 L354.5 643.1 L354.5 641.0 L350.3 641.0 L350.3 640.7 L346.1 640.7 L346.1 641.1 L342.0 641.1 L342.0 643.2 L337.8 643.2 L337.8 645.8 L333.6 645.8 L333.6 642.1 L329.4 642.1 L329.4 651.0 L325.2 651.0 L325.2 643.2 L321.1 643.2 L321.1 644.4 L316.9 644.4 L316.9 643.8 L312.7 643.8 L312.7 640.9 L308.5 640.9 L308.5 641.5 L304.3 641.5 L304.3 644.5 L300.2 644.5 L300.2 652.0 L296.0 652.0 L296.0 645.9 L291.8 645.9 L291.8 641.1 L287.6 641.1 L287.6 660.0 L283.4 660.0 L283.4 640.9 L279.3 640.9 L279.3 641.7 L275.1 641.7 L275.1 638.0 L270.9 638.0 L270.9 644.5 L266.7 644.5 L266.7 638.5 L262.5 638.5 L262.5 637.6 L258.4 637.6 L258.4 639.2 L254.2 639.2 L254.2 643.3 L250.0 643.3 L250.0 640.6 L245.8 640.6 L245.8 639.4 L241.6 639.4 L241.6 660.0 L237.5 660.0 L237.5 642.1 L233.3 642.1 L233.3 642.7 L229.1 642.7 L229.1 643.8 L224.9 643.8 L224.9 645.7 L220.7 645.7 L220.7 649.8 L216.6 649.8 L216.6 644.8 L212.4 644.8 L212.4 643.9 L208.2 643.9 L208.2 645.0 L204.0 645.0 L204.0 650.2 L199.8 650.2 L199.8 646.0 L195.7 646.0 L195.7 655.0 L191.5 655.0 L191.5 644.5 L187.3 644.5 L187.3 647.1 L183.1 647.1 L183.1 638.1 L178.9 638.1 L178.9 630.4 L174.8 630.4 L174.8 631.1 L170.6 631.1 L170.6 630.7 L166.4 630.7 L166.4 631.5 L162.2 631.5 L162.2 641.0 L158.0 641.0 L158.0 630.7 L153.9 630.7 L153.9 631.4 L149.7 631.4 L149.7 632.3 L145.5 632.3 L145.5 640.0 L141.3 640.0 L141.3 630.6 L137.1 630.6 L137.1 642.0 L133.0 642.0 L133.0 630.9 L128.8 630.9 L128.8 635.5 L124.6 635.5 L124.6 645.5 L120.4 645.5 L120.4 631.0 L116.2 631.0 L116.2 633.4 L112.1 633.4 L112.1 634.3 L107.9 634.3 L107.9 631.3 L103.7 631.3 L103.7 632.0 L99.5 632.0 L99.5 639.0 L95.3 639.0 L95.3 636.1 L91.2 636.1 L91.2 630.9 L87.0 630.9 L87.0 647.5 L82.8 647.5Z" fill="#aad3f8"/><path d="M83.2 582.4h3.3V647.5h-3.3zM87.4 598.7h3.3V630.9h-3.3zM91.6 596.4h3.3V636.1h-3.3zM95.8 592.0h3.3V639.0h-3.3zM100.0 599.1h3.3V632.0h-3.3zM104.1 601.5h3.3V631.3h-3.3zM108.3 591.0h3.3V634.3h-3.3zM112.5 600.5h3.3V633.4h-3.3zM116.7 599.0h3.3V631.0h-3.3zM120.9 585.5h3.3V645.5h-3.3zM125.0 597.0h3.3V635.5h-3.3zM129.2 601.5h3.3V630.9h-3.3zM133.4 586.0h3.3V642.0h-3.3zM137.6 600.6h3.3V630.6h-3.3zM141.8 588.0h3.3V640.0h-3.3zM145.9 600.3h3.3V632.3h-3.3zM150.1 596.0h3.3V631.4h-3.3zM154.3 599.9h3.3V630.7h-3.3zM158.5 592.0h3.3V641.0h-3.3zM162.7 600.9h3.3V631.5h-3.3zM166.8 596.9h3.3V630.7h-3.3zM171.0 600.7h3.3V631.1h-3.3zM175.2 597.7h3.3V630.4h-3.3zM179.4 596.5h3.3V638.1h-3.3zM183.6 586.2h3.3V647.1h-3.3zM187.8 591.4h3.3V644.5h-3.3zM191.9 586.3h3.3V655.0h-3.3zM196.1 592.3h3.3V646.0h-3.3zM200.3 587.8h3.3V650.2h-3.3zM204.5 591.9h3.3V645.0h-3.3zM208.6 586.2h3.3V643.9h-3.3zM212.8 592.3h3.3V644.8h-3.3zM217.0 589.3h3.3V649.8h-3.3zM221.2 592.0h3.3V645.7h-3.3zM225.4 587.0h3.3V643.8h-3.3zM229.5 592.9h3.3V642.7h-3.3zM233.7 593.1h3.3V642.1h-3.3zM237.9 595.9h3.3V660.0h-3.3zM242.1 590.9h3.3V639.4h-3.3zM246.3 596.7h3.3V640.6h-3.3zM250.4 590.9h3.3V643.3h-3.3zM254.6 596.1h3.3V639.2h-3.3zM258.8 592.0h3.3V637.6h-3.3zM263.0 596.0h3.3V638.5h-3.3zM267.2 591.2h3.3V644.5h-3.3zM271.3 595.5h3.3V638.0h-3.3zM275.5 592.9h3.3V641.7h-3.3zM279.7 594.1h3.3V640.9h-3.3zM283.9 587.2h3.3V660.0h-3.3zM288.1 591.4h3.3V641.1h-3.3zM292.2 587.9h3.3V645.9h-3.3zM296.4 590.6h3.3V652.0h-3.3zM300.6 587.8h3.3V644.5h-3.3zM304.8 591.1h3.3V641.5h-3.3zM309.0 586.6h3.3V640.9h-3.3zM313.1 591.5h3.3V643.8h-3.3zM317.3 587.0h3.3V644.4h-3.3zM321.5 590.9h3.3V643.2h-3.3zM325.7 586.0h3.3V651.0h-3.3zM329.9 591.9h3.3V642.1h-3.3zM334.0 587.6h3.3V645.8h-3.3zM338.2 590.9h3.3V643.2h-3.3zM342.4 586.1h3.3V641.1h-3.3zM346.6 590.9h3.3V640.7h-3.3zM350.8 587.8h3.3V641.0h-3.3zM354.9 591.9h3.3V643.1h-3.3zM359.1 587.9h3.3V646.4h-3.3zM363.3 592.1h3.3V640.9h-3.3zM367.5 589.7h3.3V644.5h-3.3zM371.7 591.9h3.3V640.9h-3.3zM375.8 589.0h3.3V641.6h-3.3zM380.0 595.1h3.3V639.0h-3.3zM384.2 592.7h3.3V639.1h-3.3zM388.4 597.0h3.3V636.2h-3.3zM392.6 597.3h3.3V633.7h-3.3zM396.8 599.8h3.3V633.6h-3.3zM400.9 597.5h3.3V633.7h-3.3zM405.1 600.2h3.3V633.0h-3.3zM409.3 597.7h3.3V634.7h-3.3zM413.5 599.8h3.3V631.3h-3.3zM417.6 597.3h3.3V633.7h-3.3zM421.8 596.8h3.3V633.2h-3.3zM426.0 595.4h3.3V635.0h-3.3zM430.2 596.4h3.3V633.8h-3.3zM434.4 595.4h3.3V634.5h-3.3zM438.5 600.6h3.3V629.9h-3.3zM442.7 602.4h3.3V627.8h-3.3zM446.9 603.5h3.3V628.2h-3.3zM451.1 602.5h3.3V627.8h-3.3zM455.3 603.5h3.3V627.9h-3.3zM459.4 601.4h3.3V628.4h-3.3zM463.6 603.4h3.3V627.7h-3.3zM467.8 602.1h3.3V628.7h-3.3zM472.0 591.3h3.3V635.6h-3.3zM476.2 587.1h3.3V641.9h-3.3zM480.3 590.4h3.3V636.4h-3.3zM484.5 579.5h3.3V646.0h-3.3zM488.7 588.5h3.3V637.9h-3.3zM492.9 584.8h3.3V642.0h-3.3zM497.1 580.0h3.3V644.0h-3.3zM501.2 586.5h3.3V641.1h-3.3zM505.4 589.6h3.3V637.1h-3.3zM509.6 585.0h3.3V647.0h-3.3zM513.8 589.2h3.3V638.5h-3.3zM518.0 585.6h3.3V638.1h-3.3zM522.1 589.8h3.3V639.9h-3.3zM526.3 587.6h3.3V636.6h-3.3zM530.5 590.4h3.3V639.9h-3.3zM534.7 585.5h3.3V638.1h-3.3zM538.9 591.1h3.3V639.2h-3.3zM543.0 586.7h3.3V637.7h-3.3zM547.2 590.7h3.3V639.8h-3.3zM551.4 587.4h3.3V641.5h-3.3zM555.6 591.0h3.3V637.9h-3.3zM559.8 588.9h3.3V643.2h-3.3zM564.0 591.1h3.3V658.5h-3.3zM568.1 588.0h3.3V641.5h-3.3zM572.3 596.6h3.3V635.0h-3.3zM576.5 589.0h3.3V641.0h-3.3zM580.7 603.4h3.3V627.0h-3.3zM584.9 602.1h3.3V628.6h-3.3zM589.0 597.0h3.3V637.0h-3.3zM593.2 601.7h3.3V626.9h-3.3zM597.4 603.1h3.3V628.0h-3.3zM601.6 596.4h3.3V633.0h-3.3zM605.8 595.0h3.3V636.0h-3.3zM609.9 597.8h3.3V634.0h-3.3zM614.1 589.5h3.3V640.0h-3.3zM618.3 597.1h3.3V631.0h-3.3zM622.5 601.8h3.3V629.6h-3.3zM626.6 597.8h3.3V633.8h-3.3zM630.8 601.3h3.3V630.4h-3.3zM635.0 597.9h3.3V633.7h-3.3zM639.2 601.9h3.3V630.2h-3.3zM643.4 602.1h3.3V629.3h-3.3zM647.5 603.2h3.3V627.5h-3.3zM651.7 601.7h3.3V628.7h-3.3zM655.9 602.7h3.3V628.2h-3.3zM660.1 598.4h3.3V630.9h-3.3zM664.3 599.6h3.3V631.2h-3.3zM668.4 597.3h3.3V632.8h-3.3zM672.6 599.4h3.3V632.0h-3.3zM676.8 597.8h3.3V633.8h-3.3zM681.0 599.0h3.3V631.0h-3.3zM685.2 597.7h3.3V631.2h-3.3zM689.3 598.7h3.3V631.9h-3.3zM693.5 597.2h3.3V633.0h-3.3zM697.7 598.4h3.3V632.3h-3.3zM701.9 597.1h3.3V633.8h-3.3zM706.1 598.2h3.3V632.2h-3.3zM710.2 599.9h3.3V629.4h-3.3zM714.4 605.5h3.3V624.6h-3.3zM718.6 609.6h0.4V620.4h-0.4z" fill="#b4dcff"/></svg><div class="lbl" style="width:277.0px">Binary Fractal - Grid Distortion - Sonauto.wav</div></div>
<div id="playhead"></div>
</div>
<div id="scroll"></div><div id="dots"><div class="dot" style="left:0.6px"></div><div class="dot" style="left:12.6px"></div><div class="dot" style="left:24.6px"></div><div class="dot" style="left:36.6px"></div><div class="dot" style="left:48.6px"></div></div>
<svg id="hw" width="1290" height="760" viewBox="0 0 1290 760"><defs><linearGradient id="ring" x1="0" y1="0" x2="0" y2="1"><stop offset="0" stop-color="#707070"/><stop offset=".5" stop-color="#868686"/><stop offset="1" stop-color="#bcbcbc"/></linearGradient><linearGradient id="hl0" x1="0" y1="0" x2="0" y2="1"><stop offset="0" stop-color="#111"/><stop offset=".6" stop-color="#222"/><stop offset="1" stop-color="#858585"/></linearGradient><radialGradient id="hole2" cx=".5" cy=".5" r=".5"><stop offset="0" stop-color="#191919"/><stop offset=".78" stop-color="#171717"/><stop offset=".86" stop-color="#2a2a2a"/><stop offset="1" stop-color="#1e1e1e"/></radialGradient><linearGradient id="ring1" x1="0" y1="0" x2="0" y2="1"><stop offset="0" stop-color="#585858"/><stop offset="1" stop-color="#8c8c8c"/></linearGradient><linearGradient id="ring2" x1="0" y1="0" x2="0" y2="1"><stop offset="0" stop-color="#2a2a2a"/><stop offset=".5" stop-color="#484848"/><stop offset=".8" stop-color="#8a8a86"/><stop offset="1" stop-color="#dadad2"/></linearGradient><linearGradient id="hole" x1="0" y1="0" x2="0" y2="1"><stop offset="0" stop-color="#222"/><stop offset="1" stop-color="#171717"/></linearGradient><linearGradient id="btnrim" x1="0" y1="0" x2="0" y2="1"><stop offset="0" stop-color="#626060"/><stop offset=".5" stop-color="#333131"/><stop offset="1" stop-color="#141313"/></linearGradient><linearGradient id="btn" x1="0" y1="0" x2="0" y2="1"><stop offset="0" stop-color="#504e4e"/><stop offset=".55" stop-color="#343232"/><stop offset="1" stop-color="#262424"/></linearGradient></defs><circle cx="1255.7" cy="62.0" r="18.3" fill="#040404"/><circle cx="1255.7" cy="62.0" r="14.6" fill="url(#hole)"/><circle cx="1255.7" cy="62.0" r="15.00" fill="none" stroke="url(#hl0)" stroke-width="0.90"/><circle cx="1255.7" cy="62.0" r="13.20" fill="none" stroke="url(#ring)" stroke-width="1.15"/><circle cx="1255.7" cy="108.2" r="18.3" fill="#040404"/><circle cx="1255.7" cy="108.2" r="14.6" fill="url(#hole)"/><circle cx="1255.7" cy="108.2" r="15.00" fill="none" stroke="url(#hl0)" stroke-width="0.90"/><circle cx="1255.7" cy="108.2" r="13.20" fill="none" stroke="url(#ring)" stroke-width="1.15"/><circle cx="1255.7" cy="167.7" r="18.3" fill="#040404"/><circle cx="1255.7" cy="167.7" r="14.6" fill="url(#hole)"/><circle cx="1255.7" cy="167.7" r="15.00" fill="none" stroke="url(#hl0)" stroke-width="0.90"/><circle cx="1255.7" cy="167.7" r="13.20" fill="none" stroke="url(#ring)" stroke-width="1.15"/><circle cx="1255.7" cy="213.9" r="18.3" fill="#040404"/><circle cx="1255.7" cy="213.9" r="14.6" fill="url(#hole)"/><circle cx="1255.7" cy="213.9" r="15.00" fill="none" stroke="url(#hl0)" stroke-width="0.90"/><circle cx="1255.7" cy="213.9" r="13.20" fill="none" stroke="url(#ring)" stroke-width="1.15"/><circle cx="1255.7" cy="273.3" r="18.3" fill="#040404"/><circle cx="1255.7" cy="273.3" r="14.6" fill="url(#hole)"/><circle cx="1255.7" cy="273.3" r="15.00" fill="none" stroke="url(#hl0)" stroke-width="0.90"/><circle cx="1255.7" cy="273.3" r="13.20" fill="none" stroke="url(#ring)" stroke-width="1.15"/><circle cx="1255.7" cy="319.5" r="18.3" fill="#040404"/><circle cx="1255.7" cy="319.5" r="14.6" fill="url(#hole)"/><circle cx="1255.7" cy="319.5" r="15.00" fill="none" stroke="url(#hl0)" stroke-width="0.90"/><circle cx="1255.7" cy="319.5" r="13.20" fill="none" stroke="url(#ring)" stroke-width="1.15"/><circle cx="1255.7" cy="379.0" r="18.3" fill="#040404"/><circle cx="1255.7" cy="379.0" r="14.6" fill="url(#hole)"/><circle cx="1255.7" cy="379.0" r="15.00" fill="none" stroke="url(#hl0)" stroke-width="0.90"/><circle cx="1255.7" cy="379.0" r="13.20" fill="none" stroke="url(#ring)" stroke-width="1.15"/><circle cx="1255.7" cy="425.2" r="18.3" fill="#040404"/><circle cx="1255.7" cy="425.2" r="14.6" fill="url(#hole)"/><circle cx="1255.7" cy="425.2" r="15.00" fill="none" stroke="url(#hl0)" stroke-width="0.90"/><circle cx="1255.7" cy="425.2" r="13.20" fill="none" stroke="url(#ring)" stroke-width="1.15"/><circle cx="1255.7" cy="484.7" r="18.3" fill="#040404"/><circle cx="1255.7" cy="484.7" r="14.6" fill="url(#hole)"/><circle cx="1255.7" cy="484.7" r="15.00" fill="none" stroke="url(#hl0)" stroke-width="0.90"/><circle cx="1255.7" cy="484.7" r="13.20" fill="none" stroke="url(#ring)" stroke-width="1.15"/><circle cx="1255.7" cy="530.9" r="18.3" fill="#040404"/><circle cx="1255.7" cy="530.9" r="14.6" fill="url(#hole)"/><circle cx="1255.7" cy="530.9" r="15.00" fill="none" stroke="url(#hl0)" stroke-width="0.90"/><circle cx="1255.7" cy="530.9" r="13.20" fill="none" stroke="url(#ring)" stroke-width="1.15"/><circle cx="1255.7" cy="590.4" r="18.3" fill="#040404"/><circle cx="1255.7" cy="590.4" r="14.6" fill="url(#hole)"/><circle cx="1255.7" cy="590.4" r="15.00" fill="none" stroke="url(#hl0)" stroke-width="0.90"/><circle cx="1255.7" cy="590.4" r="13.20" fill="none" stroke="url(#ring)" stroke-width="1.15"/><circle cx="1255.7" cy="636.6" r="18.3" fill="#040404"/><circle cx="1255.7" cy="636.6" r="14.6" fill="url(#hole)"/><circle cx="1255.7" cy="636.6" r="15.00" fill="none" stroke="url(#hl0)" stroke-width="0.90"/><circle cx="1255.7" cy="636.6" r="13.20" fill="none" stroke="url(#ring)" stroke-width="1.15"/><circle cx="104.6" cy="735.6" r="18.4" fill="rgba(0,0,0,.16)"/><circle cx="104.6" cy="734.0" r="17.8" fill="#080808"/><circle cx="104.6" cy="733.7" r="16.4" fill="url(#btnrim)"/><circle cx="104.6" cy="734.2" r="15.8" fill="url(#btn)"/><rect x="123.9" y="733.6" width="16" height="1.4" fill="#262626"/><circle cx="162.5" cy="734.3" r="18.6" fill="#8b8b8b"/><circle cx="162.5" cy="734.3" r="14.7" fill="url(#hole2)"/><circle cx="162.5" cy="734.3" r="13.55" fill="none" stroke="url(#ring1)" stroke-width="0.90"/><circle cx="162.5" cy="734.3" r="12.10" fill="none" stroke="url(#ring2)" stroke-width="1.30"/><circle cx="298.7" cy="735.6" r="18.4" fill="rgba(0,0,0,.16)"/><circle cx="298.7" cy="734.0" r="17.8" fill="#080808"/><circle cx="298.7" cy="733.7" r="16.4" fill="url(#btnrim)"/><circle cx="298.7" cy="734.2" r="15.8" fill="url(#btn)"/><rect x="318.2" y="733.6" width="15.8" height="1.4" fill="#262626"/><circle cx="355.8" cy="734.3" r="18.6" fill="#8b8b8b"/><circle cx="355.8" cy="734.3" r="14.7" fill="url(#hole2)"/><circle cx="355.8" cy="734.3" r="13.55" fill="none" stroke="url(#ring1)" stroke-width="0.90"/><circle cx="355.8" cy="734.3" r="12.10" fill="none" stroke="url(#ring2)" stroke-width="1.30"/><circle cx="904.5" cy="733.5" r="18.6" fill="#5b84c2"/><circle cx="904.5" cy="733.5" r="14.7" fill="url(#hole2)"/><circle cx="904.5" cy="733.5" r="13.55" fill="none" stroke="url(#ring1)" stroke-width="0.90"/><circle cx="904.5" cy="733.5" r="12.10" fill="none" stroke="url(#ring2)" stroke-width="1.30"/><circle cx="1089.4" cy="733.7" r="18.3" fill="#040404"/><circle cx="1089.4" cy="733.7" r="14.6" fill="url(#hole)"/><circle cx="1089.4" cy="733.7" r="15.00" fill="none" stroke="url(#hl0)" stroke-width="0.90"/><circle cx="1089.4" cy="733.7" r="13.20" fill="none" stroke="url(#ring)" stroke-width="1.15"/><circle cx="1136.2" cy="733.7" r="18.3" fill="#040404"/><circle cx="1136.2" cy="733.7" r="14.6" fill="url(#hole)"/><circle cx="1136.2" cy="733.7" r="15.00" fill="none" stroke="url(#hl0)" stroke-width="0.90"/><circle cx="1136.2" cy="733.7" r="13.20" fill="none" stroke="url(#ring)" stroke-width="1.15"/></svg>
<div class="div" style="left:754.2px"></div>
<div class="div" style="left:953.2px"></div>
<div class="div" style="left:1181.8px"></div>
<div class="blabel" style="left:27.0px">PLAY</div>
<div class="blabel" style="left:215.7px">RESET</div>
<div class="blabel" style="left:783.5px">POSITION</div>
<div class="blabel" style="left:982.2px">MIX OUT</div>
</body></html>
